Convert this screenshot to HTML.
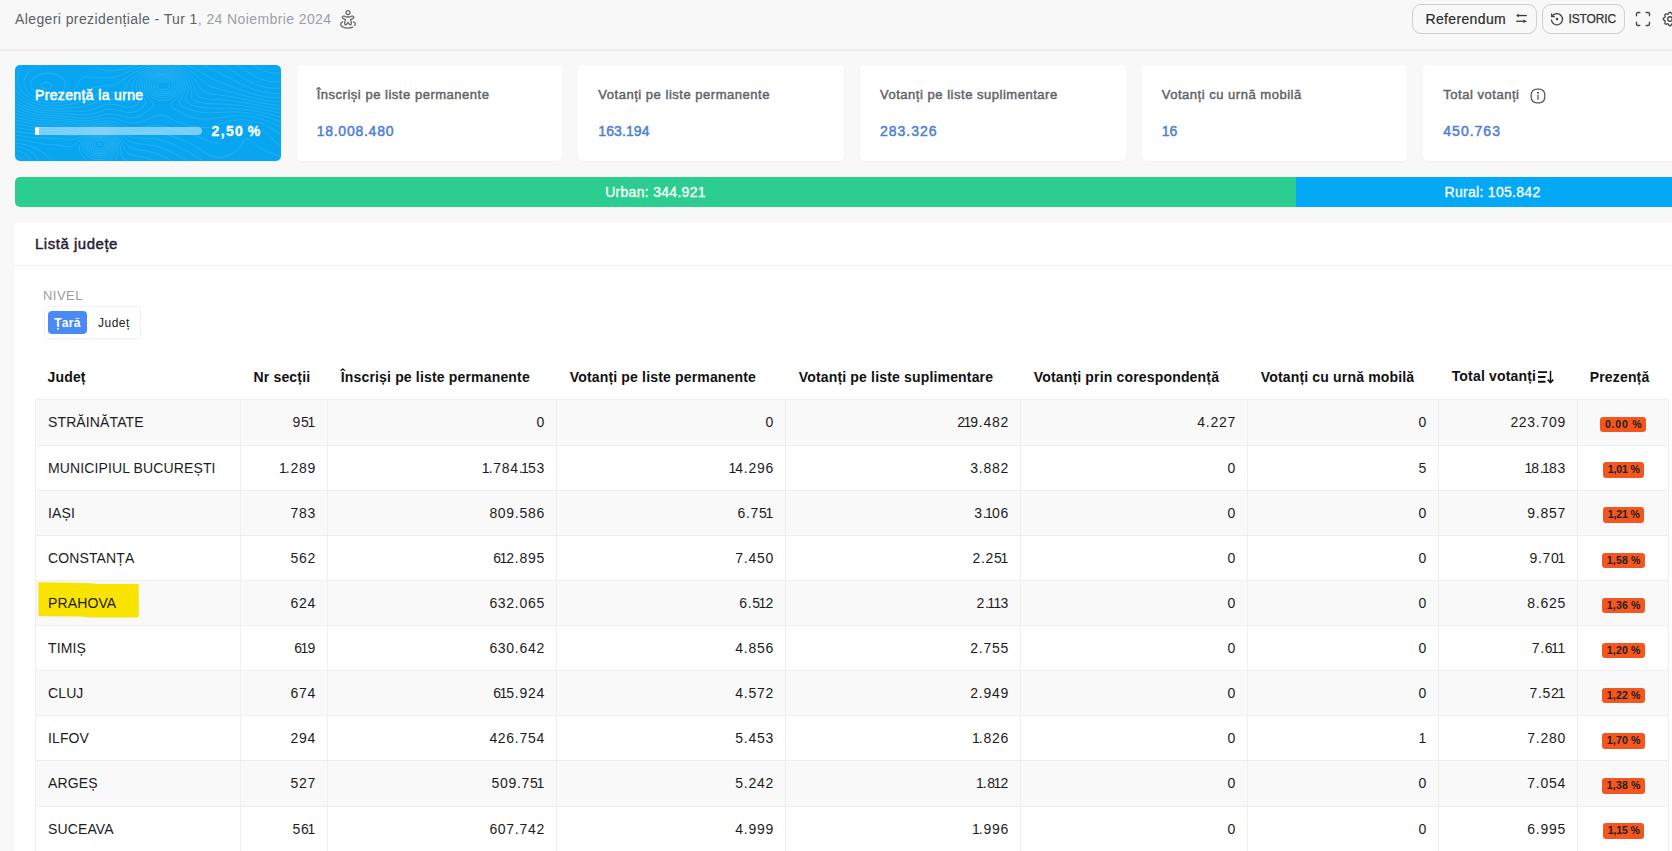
<!DOCTYPE html>
<html>
<head>
<meta charset="utf-8">
<style>
*{box-sizing:border-box;margin:0;padding:0}
html,body{width:1672px;height:851px;overflow:hidden;background:#f8f8f8;font-family:"Liberation Sans",sans-serif;color:#1a1a1a}
.abs{position:absolute}
#topbar{position:absolute;left:0;top:0;width:1672px;height:50px;background:#f8f8f8;border-bottom:1px solid #e9e9e9;box-shadow:0 1px 2px rgba(0,0,0,0.03)}
#title{position:absolute;left:15px;top:10px;font-size:14px;line-height:18px;color:#5b5e65;white-space:nowrap;letter-spacing:0.4px}
#title span{color:#9b9fa6}
.btn{position:absolute;top:4px;height:30px;border:1px solid #cfcfcf;border-radius:9px;background:#f8f8f8;white-space:nowrap}
.card{position:absolute;top:65px;height:96px;width:265.67px;background:#fff;border-radius:5px;box-shadow:0 1px 2px rgba(0,0,0,0.035)}
.card .t{position:absolute;left:20px;font-size:13px;font-weight:400;color:#5f6368;white-space:nowrap;letter-spacing:0.52px;-webkit-text-stroke:0.45px #5f6368}
.card .v{position:absolute;left:20px;font-size:14px;font-weight:400;-webkit-text-stroke:0.5px #4f80d4;color:#4f80d4;white-space:nowrap;letter-spacing:0.75px}
#panel{position:absolute;left:15px;top:223px;width:1674px;height:700px;background:#fff}
table{position:absolute;left:35px;top:355px;border-collapse:collapse;table-layout:fixed}
th{height:44px;text-align:left;font-size:14px;font-weight:700;padding:0 0 0 13px;white-space:nowrap;letter-spacing:0.17px;color:#111}
td{height:45.125px;font-size:14px;padding:0 11.3px 0 12px;text-align:right;border:1px solid #efefef;white-space:nowrap;color:#1c1c1c;letter-spacing:0.7px}
.o{font-weight:400;letter-spacing:-1px}
.p{font-weight:400;letter-spacing:-1.5px}
td:first-child{text-align:left;padding-left:12px;letter-spacing:0.12px}
th:first-child,th:last-child{padding-left:12px}
tbody tr:nth-child(odd) td{background:#f9f9f9}
tbody tr:first-child td{height:46px}
.badge{display:inline-block;background:#f4561f;color:#1e1e1e;font-size:10.5px;font-weight:700;border-radius:3px;padding:0 4px 0 5px;height:15.5px;line-height:15.5px;letter-spacing:0.2px;position:relative;top:1.5px}
td.pc{text-align:center;padding:0;letter-spacing:0}
</style>
</head>
<body>
<div id="topbar">
  <div id="title">Alegeri prezidențiale - Tur 1<span>, 24 Noiembrie 2024</span></div>
  <svg class="abs" style="left:338px;top:8px" width="20" height="22" viewBox="0 0 20 22" fill="none" stroke="#6a6a6a" stroke-width="1.3" stroke-linecap="round" stroke-linejoin="round">
    <circle cx="10" cy="4.6" r="2"/>
    <path d="M6.2 8.2 C4.3 7.6 3.6 9.4 5 10.4 L7.4 11.6 L6.6 15.2 C6.3 16.6 7.9 17.3 8.7 16.2 L10 14.4 L11.3 16.2 C12.1 17.3 13.7 16.6 13.4 15.2 L12.6 11.6 L15 10.4 C16.4 9.4 15.7 7.6 13.8 8.2 L11.4 9 L8.6 9 Z"/>
    <path d="M4.6 13.8 C2 15 2 17.6 4.5 18.8 C7.5 20.1 12 20.2 14.8 19.2"/>
    <path d="M15.6 13.8 C17.6 14.6 17.9 16.2 16.6 17.4"/>
  </svg>
  <div class="btn" style="left:1412px;width:124.5px"></div>
  <div class="abs" style="left:1425.5px;top:10px;font-size:14px;line-height:18px;color:#2b2b2b;white-space:nowrap;letter-spacing:0.35px;-webkit-text-stroke:0.2px #2b2b2b">Referendum</div>
  <svg class="abs" style="left:1514px;top:12px" width="14" height="13" viewBox="0 0 14 13" fill="#3a3a3a" stroke="none">
    <path d="M4.5 2.9 H12.8 V4.2 H4.5 Z"/><path d="M2.2 3.5 L4.8 1.6 L4.8 5.4 Z"/>
    <path d="M2.2 8.6 H9.5 V9.9 H2.2 Z"/><path d="M13 9.25 L9.3 7.4 L9.3 11.1 Z"/>
  </svg>
  <div class="btn" style="left:1541.5px;width:83px"></div>
  <svg class="abs" style="left:1549px;top:11px" width="16" height="16" viewBox="0 0 16 16" fill="none" stroke="#444" stroke-width="1.3" stroke-linecap="round" stroke-linejoin="round">
    <path d="M3.2 5.2 A5.6 5.6 0 1 1 2.4 9.2"/>
    <path d="M2.6 2.8 V5.6 H5.4"/>
    <circle cx="8" cy="8" r="0.6" fill="#444"/>
  </svg>
  <div class="abs" style="left:1568.5px;top:12px;font-size:12px;line-height:14px;color:#333;white-space:nowrap;letter-spacing:-0.15px;-webkit-text-stroke:0.25px #333">ISTORIC</div>
  <svg class="abs" style="left:1635px;top:11px" width="17" height="17" viewBox="0 0 17 17" fill="none" stroke="#4a4a4a" stroke-width="1.4" stroke-linecap="round" stroke-linejoin="round">
    <path d="M1.5 4.8 V3 Q1.5 1.5 3 1.5 H4.8 M11.2 1.5 H13 Q14.5 1.5 14.5 3 V4.8 M14.5 11.2 V13 Q14.5 14.5 13 14.5 H11.2 M4.8 14.5 H3 Q1.5 14.5 1.5 13 V11.2"/>
  </svg>
  <svg class="abs" style="left:1661px;top:10px" width="18" height="18" viewBox="0 0 24 24" fill="none" stroke="#4a4a4a" stroke-width="1.8" stroke-linecap="round" stroke-linejoin="round">
    <path d="M10.3 4.3c.4-1.8 3-1.8 3.4 0a1.7 1.7 0 0 0 2.6 1.1c1.5-.9 3.3.8 2.4 2.4a1.7 1.7 0 0 0 1 2.5c1.8.4 1.8 3 0 3.4a1.7 1.7 0 0 0-1 2.6c.9 1.5-.9 3.3-2.4 2.4a1.7 1.7 0 0 0-2.6 1c-.4 1.8-3 1.8-3.4 0a1.7 1.7 0 0 0-2.6-1c-1.5.9-3.3-.9-2.4-2.4a1.7 1.7 0 0 0-1-2.6c-1.8-.4-1.8-3 0-3.4a1.7 1.7 0 0 0 1-2.5c-.9-1.6.9-3.3 2.4-2.4 1 .6 2.3.1 2.6-1.1z"/>
    <circle cx="12" cy="12" r="3"/>
  </svg>
</div>
<div class="card" style="left:15px;background:#08a6f0;overflow:hidden">
<svg class="abs" style="left:0;top:0" width="266" height="96" viewBox="0 0 266 96" fill="none" stroke="rgba(255,255,255,0.13)" stroke-width="0.9"><path d="M237.2 0.0 L238.0 0.5 L239.0 1.0 L240.0 1.6 L241.0 2.1 L242.0 2.7 L243.0 3.2 L244.0 3.7 L245.0 4.2 L246.0 4.6 L247.0 5.1 L248.1 5.5 L249.4 6.0 L250.5 6.4 L251.5 6.7 L252.5 7.0 L254.0 7.4 L255.0 7.6 L256.5 7.9 L257.5 8.0 L259.0 8.2 L260.5 8.3 L262.0 8.4 L263.5 8.4 L265.0 8.4"/><path d="M222.3 0.0 L223.0 0.5 L224.0 1.1 L225.0 1.8 L226.0 2.4 L226.9 3.0 L227.7 3.5 L228.5 4.0 L229.5 4.7 L230.5 5.3 L231.5 6.0 L232.3 6.5 L233.1 7.0 L234.0 7.6 L235.0 8.2 L236.0 8.8 L237.0 9.4 L238.0 10.0 L238.9 10.5 L239.8 11.0 L240.7 11.5 L241.7 12.0 L242.7 12.5 L243.8 13.0 L244.9 13.5 L246.0 13.9 L247.0 14.3 L248.0 14.6 L249.1 15.0 L250.5 15.4 L251.5 15.6 L253.0 16.0 L254.0 16.1 L255.5 16.4 L256.9 16.5 L258.0 16.6 L259.5 16.6 L261.0 16.6 L262.5 16.6 L264.0 16.5 L265.0 16.4"/><path d="M206.8 0.0 L207.8 0.5 L208.7 1.0 L209.6 1.5 L210.5 2.0 L211.5 2.6 L212.5 3.1 L213.5 3.7 L214.5 4.3 L215.5 4.9 L216.5 5.5 L217.3 6.0 L218.1 6.5 L219.0 7.0 L220.0 7.7 L221.0 8.3 L222.0 8.9 L222.9 9.5 L223.7 10.0 L224.5 10.5 L225.5 11.1 L226.5 11.7 L227.5 12.3 L228.5 13.0 L229.4 13.5 L230.3 14.0 L231.1 14.5 L232.0 15.0 L233.0 15.6 L234.0 16.1 L235.0 16.6 L236.0 17.1 L237.0 17.6 L238.0 18.1 L239.0 18.6 L240.0 19.0 L241.2 19.5 L242.5 20.0 L243.5 20.3 L244.5 20.7 L245.5 21.0 L247.0 21.4 L248.0 21.7 L249.2 22.0 L250.5 22.3 L251.7 22.5 L253.0 22.7 L254.5 22.9 L255.5 23.0 L257.0 23.1 L258.5 23.2 L260.0 23.2 L261.5 23.2 L263.0 23.2 L264.5 23.1 L265.7 23.0"/><path d="M186.6 0.0 L187.9 0.5 L189.0 0.9 L190.0 1.3 L191.0 1.7 L192.0 2.1 L193.0 2.6 L194.0 3.0 L195.2 3.5 L196.3 4.0 L197.4 4.5 L198.4 5.0 L199.5 5.5 L200.5 6.0 L201.5 6.5 L202.5 6.9 L203.5 7.4 L204.5 7.9 L205.5 8.4 L206.5 8.9 L207.5 9.5 L208.5 10.0 L209.5 10.5 L210.5 11.0 L211.4 11.5 L212.4 12.0 L213.3 12.5 L214.3 13.0 L215.2 13.5 L216.2 14.0 L217.1 14.5 L218.1 15.0 L219.0 15.5 L220.0 16.0 L221.0 16.5 L222.0 17.0 L223.0 17.5 L224.0 18.1 L225.0 18.6 L226.0 19.0 L227.0 19.5 L228.0 20.0 L229.1 20.5 L230.2 21.0 L231.3 21.5 L232.5 22.0 L233.5 22.4 L234.5 22.8 L235.5 23.2 L236.5 23.6 L237.6 24.0 L239.0 24.5 L240.0 24.8 L241.0 25.1 L242.2 25.5 L243.5 25.9 L244.5 26.1 L245.9 26.5 L247.0 26.7 L248.2 27.0 L249.5 27.3 L250.9 27.5 L252.0 27.7 L253.5 27.9 L254.5 28.0 L256.0 28.2 L257.5 28.3 L259.0 28.4 L260.5 28.4 L262.0 28.4 L263.5 28.4 L265.0 28.4"/><path d="M32.9 24.0 L34.0 23.7 L35.0 23.3 L36.0 22.6 L36.5 21.9 L36.7 20.5 L36.4 19.5 L35.5 18.6 L34.5 18.0 L33.5 17.7 L32.5 17.5 L31.0 17.4 L30.0 17.6 L28.6 18.0 L27.8 18.5 L27.0 19.4 L26.6 20.5 L27.0 21.9 L27.5 22.5 L28.5 23.3 L29.5 23.7 L30.8 24.0 L32.0 24.1"/><path d="M79.3 0.0 L80.0 0.6 L81.0 1.4 L81.9 2.0 L82.7 2.5 L83.6 3.0 L84.6 3.5 L85.8 4.0 L87.0 4.5 L88.0 4.8 L89.0 5.1 L90.5 5.4 L91.5 5.6 L93.0 5.7 L94.5 5.9 L96.0 5.9 L97.5 5.9 L99.0 5.8 L100.5 5.6 L101.5 5.5 L103.0 5.2 L104.1 5.0 L105.5 4.7 L106.5 4.5 L108.0 4.1 L109.0 3.8 L110.2 3.5 L111.5 3.1 L112.5 2.8 L113.6 2.5 L115.0 2.1 L116.0 1.8 L117.0 1.5 L118.5 1.1 L119.5 0.8 L120.5 0.5 L122.0 0.1"/><path d="M170.2 0.0 L171.5 0.4 L172.5 0.8 L173.5 1.1 L174.5 1.5 L175.7 2.0 L176.9 2.5 L178.0 3.0 L179.0 3.5 L180.0 3.9 L181.0 4.5 L182.0 5.0 L183.0 5.5 L183.8 6.0 L184.7 6.5 L185.6 7.0 L186.5 7.6 L187.5 8.2 L188.5 8.8 L189.5 9.4 L190.5 10.0 L191.4 10.5 L192.3 11.0 L193.1 11.5 L194.0 12.0 L195.0 12.5 L196.0 13.0 L197.0 13.5 L198.0 14.0 L199.1 14.5 L200.2 15.0 L201.4 15.5 L202.5 16.0 L203.5 16.4 L204.5 16.8 L205.5 17.2 L206.5 17.5 L207.7 18.0 L209.0 18.5 L210.0 18.9 L211.0 19.3 L212.0 19.7 L213.0 20.0 L214.2 20.5 L215.5 21.0 L216.5 21.4 L217.5 21.8 L218.5 22.1 L219.5 22.5 L220.7 23.0 L222.0 23.5 L223.0 23.8 L224.0 24.2 L225.0 24.6 L226.2 25.0 L227.5 25.5 L228.5 25.8 L229.5 26.2 L230.5 26.5 L232.0 27.0 L233.0 27.3 L234.0 27.7 L235.1 28.0 L236.5 28.4 L237.5 28.7 L238.6 29.0 L240.0 29.4 L241.0 29.6 L242.4 30.0 L243.5 30.3 L244.6 30.5 L246.0 30.8 L247.0 31.0 L248.5 31.3 L249.7 31.5 L251.0 31.7 L252.5 31.9 L253.5 32.1 L255.0 32.3 L256.5 32.4 L257.5 32.5 L259.0 32.6 L260.5 32.7 L262.0 32.8 L263.5 32.8 L265.0 32.9"/><path d="M37.7 30.5 L39.0 30.2 L40.0 30.0 L41.4 29.5 L42.5 29.1 L43.5 28.6 L44.5 28.1 L45.4 27.5 L46.1 27.0 L47.0 26.2 L47.8 25.5 L48.5 24.6 L49.0 23.9 L49.5 23.0 L50.0 21.8 L50.3 20.5 L50.4 19.0 L50.1 17.5 L49.8 16.5 L49.3 15.5 L48.6 14.5 L48.0 13.7 L47.2 13.0 L46.5 12.4 L45.5 11.7 L44.5 11.1 L43.5 10.5 L42.5 10.1 L41.5 9.7 L40.5 9.4 L39.2 9.0 L38.0 8.7 L36.6 8.5 L35.5 8.4 L34.0 8.2 L32.5 8.2 L31.0 8.3 L29.5 8.4 L28.5 8.5 L27.0 8.8 L26.0 9.1 L24.6 9.5 L23.5 9.9 L22.5 10.3 L21.5 10.9 L20.5 11.5 L19.8 12.0 L19.0 12.6 L18.1 13.5 L17.5 14.2 L17.0 15.0 L16.4 16.0 L16.0 17.1 L15.7 18.5 L15.7 20.0 L16.0 21.5 L16.3 22.5 L16.8 23.5 L17.5 24.5 L18.0 25.1 L18.8 26.0 L19.5 26.6 L20.5 27.4 L21.5 28.0 L22.3 28.5 L23.4 29.0 L24.5 29.5 L25.5 29.8 L26.5 30.1 L28.0 30.5 L29.0 30.6 L30.5 30.8 L32.0 30.9 L33.5 30.9 L35.0 30.9 L36.5 30.7 L37.7 30.5"/><path d="M28.2 0.0 L27.0 0.3 L26.0 0.5 L24.5 1.0 L23.5 1.4 L22.5 1.7 L21.5 2.2 L20.5 2.6 L19.5 3.1 L18.5 3.7 L17.5 4.3 L16.5 5.0 L15.8 5.5 L15.0 6.2 L14.1 7.0 L13.5 7.6 L12.6 8.5 L12.0 9.3 L11.5 10.0 L10.8 11.0 L10.3 12.0 L9.9 13.0 L9.5 14.0 L9.1 15.5 L9.0 16.5 L8.9 18.0 L9.0 19.0 L9.3 20.5 L9.6 21.5 L10.0 22.6 L10.5 23.7 L11.0 24.5 L11.7 25.5 L12.5 26.5 L13.0 27.1 L13.9 28.0 L14.5 28.5 L15.5 29.3 L16.5 30.0 L17.3 30.5 L18.1 31.0 L19.1 31.5 L20.1 32.0 L21.3 32.5 L22.5 33.0 L23.5 33.3 L24.5 33.6 L26.0 34.0 L27.0 34.2 L28.5 34.4 L29.5 34.6 L31.0 34.7 L32.5 34.8 L34.0 34.8 L35.5 34.8 L37.0 34.7 L38.5 34.6 L39.5 34.5 L41.0 34.2 L42.2 34.0 L43.5 33.7 L44.5 33.5 L46.0 33.0 L47.0 32.7 L48.0 32.3 L49.0 31.9 L50.0 31.5 L51.0 31.0 L52.0 30.5 L53.0 29.9 L54.0 29.3 L55.0 28.5 L55.7 28.0 L56.5 27.3 L57.4 26.5 L58.0 25.9 L58.8 25.0 L59.5 24.2 L60.0 23.5 L60.8 22.5 L61.4 21.5 L62.0 20.6 L62.5 19.7 L63.0 18.9 L63.5 18.0 L64.1 17.0 L64.7 16.0 L65.4 15.0 L66.0 14.2 L66.8 13.5 L67.5 13.0 L68.5 12.5 L70.0 12.1 L71.0 12.0 L72.5 11.9 L74.0 12.0 L75.0 12.1 L76.5 12.2 L78.0 12.4 L79.4 12.5 L80.5 12.6 L82.0 12.8 L83.5 12.9 L85.0 13.0 L86.0 13.0 L87.5 13.1 L89.0 13.1 L90.5 13.1 L92.0 13.0 L93.0 13.0 L94.5 12.8 L96.0 12.6 L97.0 12.5 L98.5 12.2 L99.5 12.0 L101.0 11.6 L102.0 11.3 L103.0 10.9 L104.3 10.5 L105.5 10.0 L106.5 9.7 L107.5 9.2 L108.5 8.8 L109.5 8.4 L110.5 8.0 L111.6 7.5 L112.7 7.0 L113.9 6.5 L115.0 6.0 L116.0 5.6 L117.0 5.2 L118.0 4.8 L119.0 4.4 L120.1 4.0 L121.5 3.5 L122.5 3.2 L123.5 2.8 L124.6 2.5 L126.0 2.1 L127.0 1.8 L128.2 1.5 L129.5 1.2 L130.5 0.9 L132.0 0.6 L133.0 0.4 L134.5 0.2 L135.5 0.0"/><path d="M157.8 0.0 L159.0 0.2 L160.5 0.5 L161.5 0.7 L162.6 1.0 L164.0 1.4 L165.0 1.6 L166.1 2.0 L167.5 2.5 L168.5 2.8 L169.5 3.2 L170.5 3.6 L171.5 4.1 L172.5 4.6 L173.5 5.1 L174.5 5.6 L175.5 6.2 L176.5 6.8 L177.5 7.4 L178.3 8.0 L179.0 8.5 L180.0 9.2 L181.0 10.0 L181.6 10.5 L182.5 11.3 L183.3 12.0 L184.0 12.7 L184.9 13.5 L185.5 14.1 L186.4 15.0 L187.0 15.6 L188.0 16.5 L188.5 17.0 L189.5 17.9 L190.3 18.5 L191.0 19.0 L192.0 19.7 L193.0 20.3 L194.0 20.8 L195.0 21.3 L196.0 21.7 L197.0 22.1 L198.3 22.5 L199.5 22.9 L200.5 23.1 L201.9 23.5 L203.0 23.8 L204.0 24.0 L205.5 24.4 L206.5 24.6 L208.0 25.0 L209.0 25.2 L210.2 25.5 L211.5 25.8 L212.5 26.1 L214.0 26.4 L215.0 26.7 L216.1 27.0 L217.5 27.4 L218.5 27.6 L219.9 28.0 L221.0 28.3 L222.0 28.6 L223.5 29.0 L224.5 29.3 L225.5 29.5 L227.0 29.9 L228.0 30.2 L229.1 30.5 L230.5 30.9 L231.5 31.1 L232.9 31.5 L234.0 31.8 L235.0 32.0 L236.5 32.4 L237.5 32.6 L239.0 33.0 L240.0 33.2 L241.3 33.5 L242.5 33.8 L243.6 34.0 L245.0 34.3 L246.1 34.5 L247.5 34.8 L248.8 35.0 L250.0 35.2 L251.5 35.4 L252.5 35.6 L254.0 35.8 L255.4 36.0 L256.5 36.1 L258.0 36.3 L259.5 36.5 L260.5 36.6 L262.0 36.7 L263.5 36.8 L265.0 36.9"/><path d="M6.2 0.0 L5.9 1.0 L5.5 2.5 L5.2 3.5 L4.8 4.5 L4.5 5.5 L4.0 7.0 L3.7 8.0 L3.4 9.0 L3.1 10.5 L3.0 11.5 L2.8 13.0 L2.7 14.5 L2.8 16.0 L2.9 17.5 L3.1 18.5 L3.5 20.0 L3.8 21.0 L4.2 22.0 L4.7 23.0 L5.2 24.0 L5.9 25.0 L6.5 25.9 L7.0 26.6 L7.8 27.5 L8.5 28.3 L9.2 29.0 L10.0 29.7 L11.0 30.5 L11.6 31.0 L12.5 31.6 L13.5 32.3 L14.5 32.9 L15.5 33.5 L16.5 34.0 L17.5 34.4 L18.5 34.9 L19.5 35.3 L20.5 35.6 L21.6 36.0 L23.0 36.4 L24.0 36.7 L25.5 37.0 L26.5 37.2 L28.0 37.5 L29.0 37.6 L30.5 37.8 L32.0 37.9 L33.5 37.9 L35.0 38.0 L36.5 38.0 L38.0 37.9 L39.5 37.8 L41.0 37.7 L42.5 37.5 L43.5 37.4 L45.0 37.2 L46.1 37.0 L47.5 36.7 L48.7 36.5 L50.0 36.2 L51.0 35.9 L52.5 35.5 L53.5 35.2 L54.5 34.9 L55.8 34.5 L57.0 34.0 L58.0 33.6 L59.0 33.2 L60.0 32.8 L61.0 32.3 L62.0 31.7 L63.0 31.2 L64.0 30.6 L65.0 30.0 L65.8 29.5 L66.6 29.0 L67.5 28.5 L68.5 27.8 L69.5 27.2 L70.5 26.6 L71.5 26.0 L72.4 25.5 L73.3 25.0 L74.4 24.5 L75.5 24.0 L76.5 23.6 L77.5 23.2 L78.5 22.9 L80.0 22.5 L81.0 22.3 L82.3 22.0 L83.5 21.8 L85.0 21.5 L86.0 21.4 L87.5 21.2 L88.9 21.0 L90.0 20.9 L91.5 20.7 L93.0 20.5 L94.0 20.4 L95.5 20.1 L96.5 20.0 L98.0 19.7 L99.0 19.4 L100.5 19.0 L101.5 18.7 L102.5 18.3 L103.5 17.8 L104.5 17.3 L105.5 16.7 L106.5 16.0 L107.2 15.5 L108.0 14.9 L109.0 14.2 L110.0 13.5 L110.6 13.0 L111.5 12.4 L112.5 11.7 L113.5 11.0 L114.3 10.5 L115.0 10.0 L116.0 9.4 L117.0 8.8 L118.0 8.3 L119.0 7.7 L120.0 7.2 L121.0 6.8 L122.0 6.3 L123.0 5.9 L124.0 5.5 L125.2 5.0 L126.5 4.5 L127.5 4.2 L128.5 3.9 L129.7 3.5 L131.0 3.2 L132.0 2.9 L133.5 2.6 L134.5 2.3 L136.0 2.1 L137.0 1.9 L138.5 1.7 L140.0 1.5 L141.0 1.4 L142.5 1.3 L144.0 1.2 L145.5 1.1 L147.0 1.1 L148.5 1.1 L150.0 1.2 L151.5 1.3 L153.0 1.4 L154.0 1.6 L155.5 1.8 L157.0 2.0 L158.0 2.2 L159.5 2.5 L160.5 2.7 L161.5 3.0 L163.0 3.4 L164.0 3.8 L165.0 4.1 L166.0 4.5 L167.2 5.0 L168.3 5.5 L169.4 6.0 L170.3 6.5 L171.2 7.0 L172.0 7.5 L173.0 8.1 L174.0 8.8 L174.9 9.5 L175.5 10.0 L176.5 10.8 L177.2 11.5 L178.0 12.3 L178.7 13.0 L179.5 14.0 L180.0 14.6 L180.7 15.5 L181.4 16.5 L182.0 17.5 L182.5 18.3 L183.0 19.1 L183.5 20.0 L184.1 21.0 L184.7 22.0 L185.4 23.0 L186.0 23.8 L186.6 24.5 L187.5 25.4 L188.2 26.0 L189.0 26.5 L190.0 27.0 L191.1 27.5 L192.5 28.0 L193.5 28.3 L194.5 28.5 L196.0 28.8 L197.2 29.0 L198.5 29.2 L200.0 29.4 L201.0 29.5 L202.5 29.7 L204.0 29.9 L205.0 30.0 L206.5 30.2 L208.0 30.4 L209.0 30.6 L210.5 30.8 L211.8 31.0 L213.0 31.2 L214.5 31.4 L215.5 31.6 L217.0 31.9 L218.0 32.1 L219.5 32.3 L220.5 32.5 L222.0 32.8 L223.0 33.0 L224.5 33.3 L225.5 33.6 L227.0 33.9 L228.0 34.1 L229.5 34.4 L230.5 34.6 L232.0 34.9 L233.0 35.2 L234.5 35.5 L235.5 35.7 L237.0 36.0 L238.0 36.2 L239.4 36.5 L240.5 36.7 L241.8 37.0 L243.0 37.2 L244.4 37.5 L245.5 37.7 L247.0 38.0 L248.0 38.2 L249.5 38.5 L250.5 38.6 L252.0 38.9 L253.0 39.0 L254.5 39.3 L256.0 39.5 L257.0 39.6 L258.5 39.9 L259.6 40.0 L261.0 40.2 L262.5 40.4 L263.8 40.5 L265.0 40.6"/><path d="M0.0 23.9 L0.5 24.7 L1.1 25.5 L1.8 26.5 L2.5 27.3 L3.1 28.0 L4.0 29.0 L4.5 29.5 L5.5 30.4 L6.2 31.0 L7.0 31.7 L8.0 32.5 L8.8 33.0 L9.5 33.5 L10.5 34.1 L11.5 34.7 L12.5 35.3 L13.5 35.8 L14.5 36.3 L15.5 36.8 L16.5 37.2 L17.5 37.6 L18.7 38.0 L20.0 38.4 L21.0 38.7 L22.0 39.0 L23.5 39.4 L24.5 39.6 L26.0 39.9 L27.0 40.1 L28.5 40.3 L30.0 40.5 L31.0 40.5 L32.5 40.7 L34.0 40.7 L35.5 40.8 L37.0 40.8 L38.5 40.8 L40.0 40.7 L41.5 40.7 L43.0 40.6 L44.0 40.5 L45.5 40.4 L47.0 40.2 L48.5 40.1 L49.5 39.9 L51.0 39.8 L52.5 39.6 L53.5 39.4 L55.0 39.2 L56.1 39.0 L57.5 38.7 L58.8 38.5 L60.0 38.2 L61.1 38.0 L62.5 37.6 L63.5 37.4 L64.8 37.0 L66.0 36.6 L67.0 36.3 L68.0 35.9 L69.0 35.5 L70.2 35.0 L71.3 34.5 L72.4 34.0 L73.5 33.5 L74.5 33.0 L75.5 32.6 L76.5 32.1 L77.5 31.7 L78.5 31.3 L79.5 30.9 L80.5 30.5 L81.8 30.0 L83.0 29.6 L84.0 29.3 L85.3 29.0 L86.5 28.7 L87.6 28.5 L89.0 28.2 L90.5 28.0 L91.5 27.9 L93.0 27.8 L94.5 27.7 L96.0 27.6 L97.5 27.6 L99.0 27.6 L100.5 27.6 L102.0 27.6 L103.3 27.5 L104.5 27.4 L106.0 27.1 L107.0 26.8 L108.0 26.2 L108.9 25.5 L109.5 24.7 L110.0 24.0 L110.5 23.0 L111.0 22.0 L111.5 20.9 L112.0 19.8 L112.5 18.9 L113.0 18.0 L113.6 17.0 L114.3 16.0 L115.0 15.1 L115.5 14.5 L116.5 13.5 L117.0 13.0 L118.0 12.1 L118.7 11.5 L119.5 10.9 L120.5 10.2 L121.5 9.5 L122.4 9.0 L123.2 8.5 L124.2 8.0 L125.2 7.5 L126.3 7.0 L127.5 6.5 L128.5 6.1 L129.5 5.7 L130.5 5.4 L131.8 5.0 L133.0 4.6 L134.0 4.4 L135.5 4.0 L136.5 3.8 L138.0 3.6 L139.0 3.4 L140.5 3.2 L142.0 3.1 L143.0 3.0 L144.5 2.9 L146.0 2.8 L147.5 2.8 L149.0 2.9 L150.5 2.9 L151.5 3.0 L153.0 3.2 L154.5 3.4 L155.5 3.5 L157.0 3.8 L158.0 4.0 L159.5 4.4 L160.5 4.7 L161.6 5.0 L163.0 5.5 L164.0 5.8 L165.0 6.3 L166.0 6.7 L167.0 7.2 L168.0 7.7 L169.0 8.3 L170.0 8.9 L170.8 9.5 L171.5 10.0 L172.5 10.8 L173.3 11.5 L174.0 12.2 L174.7 13.0 L175.5 13.9 L176.0 14.6 L176.7 15.5 L177.3 16.5 L177.8 17.5 L178.3 18.5 L178.7 19.5 L179.1 20.5 L179.5 22.0 L179.8 23.0 L180.0 24.0 L180.4 25.5 L180.7 26.5 L181.0 27.5 L181.5 28.6 L182.0 29.5 L182.9 30.5 L183.5 31.0 L184.5 31.7 L185.5 32.2 L186.5 32.6 L187.9 33.0 L189.0 33.3 L190.1 33.5 L191.5 33.7 L193.0 33.9 L194.0 34.0 L195.5 34.2 L197.0 34.3 L198.5 34.4 L200.0 34.5 L201.0 34.6 L202.5 34.6 L204.0 34.7 L205.5 34.8 L207.0 34.9 L208.0 35.0 L209.5 35.1 L211.0 35.3 L212.5 35.4 L213.5 35.5 L215.0 35.7 L216.5 35.9 L217.6 36.0 L219.0 36.2 L220.5 36.4 L221.5 36.5 L223.0 36.8 L224.5 37.0 L225.5 37.2 L227.0 37.4 L228.0 37.6 L229.5 37.8 L230.5 38.0 L232.0 38.3 L233.2 38.5 L234.5 38.7 L235.8 39.0 L237.0 39.2 L238.4 39.5 L239.5 39.7 L241.0 40.0 L242.0 40.2 L243.5 40.5 L244.5 40.7 L246.0 41.0 L247.0 41.1 L248.5 41.4 L249.5 41.6 L251.0 41.9 L252.0 42.1 L253.5 42.4 L254.5 42.5 L256.0 42.8 L257.2 43.0 L258.5 43.2 L260.0 43.5 L261.0 43.6 L262.5 43.9 L263.5 44.1 L265.0 44.3"/><path d="M0.0 30.1 L1.0 31.0 L1.6 31.5 L2.5 32.3 L3.4 33.0 L4.1 33.5 L5.0 34.2 L6.0 34.9 L7.0 35.5 L7.8 36.0 L8.7 36.5 L9.6 37.0 L10.5 37.5 L11.5 38.0 L12.6 38.5 L13.8 39.0 L15.0 39.5 L16.0 39.9 L17.0 40.2 L18.0 40.6 L19.4 41.0 L20.5 41.3 L21.5 41.5 L23.0 41.9 L24.0 42.1 L25.5 42.4 L26.5 42.5 L28.0 42.8 L29.5 42.9 L30.5 43.0 L32.0 43.2 L33.5 43.3 L35.0 43.3 L36.5 43.4 L38.0 43.4 L39.5 43.4 L41.0 43.4 L42.5 43.4 L44.0 43.3 L45.5 43.3 L47.0 43.2 L48.5 43.2 L50.0 43.1 L51.5 43.0 L52.5 43.0 L54.0 42.9 L55.5 42.8 L57.0 42.7 L58.5 42.7 L60.0 42.6 L61.0 42.5 L62.5 42.4 L64.0 42.2 L65.5 42.0 L66.5 41.9 L68.0 41.6 L69.0 41.4 L70.5 41.0 L71.5 40.7 L72.5 40.4 L73.8 40.0 L75.0 39.6 L76.0 39.2 L77.0 38.8 L78.0 38.3 L79.0 37.9 L80.0 37.5 L81.2 37.0 L82.4 36.5 L83.5 36.1 L84.5 35.7 L85.5 35.4 L86.9 35.0 L88.0 34.7 L89.1 34.5 L90.5 34.2 L92.0 34.1 L93.0 34.0 L94.5 33.9 L96.0 33.9 L97.4 34.0 L98.5 34.1 L100.0 34.3 L101.4 34.5 L102.5 34.7 L104.0 35.0 L105.0 35.2 L106.5 35.5 L107.5 35.7 L109.0 35.9 L110.5 36.0 L111.5 36.0 L112.5 36.0 L114.0 35.7 L115.0 35.3 L116.0 34.8 L116.8 34.0 L117.4 33.0 L117.7 32.0 L117.8 30.5 L117.7 29.0 L117.5 27.5 L117.4 26.5 L117.2 25.0 L117.1 23.5 L117.1 22.0 L117.3 20.5 L117.5 19.5 L118.0 18.0 L118.5 17.0 L119.0 16.0 L119.5 15.3 L120.1 14.5 L120.9 13.5 L121.5 12.9 L122.5 12.0 L123.1 11.5 L124.0 10.8 L125.0 10.2 L126.0 9.5 L127.0 9.0 L127.9 8.5 L129.0 8.0 L130.0 7.6 L131.0 7.2 L132.0 6.8 L133.0 6.5 L134.5 6.0 L135.5 5.8 L136.6 5.5 L138.0 5.2 L139.1 5.0 L140.5 4.8 L142.0 4.6 L143.2 4.5 L144.5 4.4 L146.0 4.4 L147.5 4.3 L149.0 4.4 L150.5 4.5 L151.5 4.5 L153.0 4.7 L154.5 4.9 L155.5 5.1 L157.0 5.4 L158.0 5.6 L159.3 6.0 L160.5 6.4 L161.5 6.7 L162.5 7.1 L163.5 7.5 L164.5 8.0 L165.5 8.5 L166.5 9.0 L167.5 9.7 L168.5 10.3 L169.4 11.0 L170.0 11.5 L171.0 12.4 L171.6 13.0 L172.4 14.0 L173.0 14.7 L173.5 15.5 L174.1 16.5 L174.6 17.5 L175.1 18.5 L175.5 19.9 L175.8 21.0 L176.0 22.5 L176.1 23.5 L176.1 25.0 L176.1 26.5 L176.0 28.0 L176.0 29.0 L176.0 30.0 L176.2 31.5 L176.5 32.6 L177.0 33.5 L177.9 34.5 L178.5 35.0 L179.5 35.7 L180.5 36.2 L181.5 36.5 L182.9 37.0 L184.0 37.3 L185.0 37.5 L186.5 37.8 L187.8 38.0 L189.0 38.2 L190.5 38.3 L192.0 38.5 L193.0 38.5 L194.5 38.6 L196.0 38.7 L197.5 38.8 L199.0 38.9 L200.5 38.9 L202.0 39.0 L203.4 39.0 L204.5 39.0 L206.0 39.1 L207.5 39.1 L209.0 39.2 L210.5 39.2 L212.0 39.3 L213.5 39.4 L215.0 39.5 L216.0 39.6 L217.5 39.7 L219.0 39.8 L220.5 40.0 L221.5 40.1 L223.0 40.2 L224.5 40.4 L225.5 40.5 L227.0 40.7 L228.5 40.9 L229.5 41.1 L231.0 41.3 L232.2 41.5 L233.5 41.7 L235.0 42.0 L236.0 42.1 L237.5 42.4 L238.5 42.6 L240.0 42.9 L241.0 43.0 L242.5 43.3 L243.5 43.5 L245.0 43.8 L246.0 44.0 L247.5 44.3 L248.5 44.5 L250.0 44.8 L251.0 45.0 L252.5 45.3 L253.5 45.6 L255.0 45.9 L256.0 46.1 L257.5 46.4 L258.5 46.6 L260.0 46.9 L261.0 47.1 L262.5 47.5 L263.5 47.7 L265.0 48.0 L266.0 48.2"/><path d="M0.0 34.4 L0.8 35.0 L1.5 35.5 L2.5 36.2 L3.5 36.8 L4.5 37.4 L5.5 38.0 L6.4 38.5 L7.4 39.0 L8.4 39.5 L9.4 40.0 L10.5 40.5 L11.5 40.9 L12.5 41.3 L13.5 41.7 L14.5 42.1 L15.7 42.5 L17.0 42.9 L18.0 43.2 L19.1 43.5 L20.5 43.9 L21.5 44.1 L23.0 44.4 L24.0 44.6 L25.5 44.8 L26.5 45.0 L28.0 45.2 L29.5 45.4 L30.8 45.5 L32.0 45.6 L33.5 45.7 L35.0 45.8 L36.5 45.8 L38.0 45.9 L39.5 45.9 L41.0 45.9 L42.5 46.0 L44.0 46.0 L45.5 46.0 L47.0 46.0 L48.5 46.0 L50.0 46.0 L51.0 46.0 L52.5 46.0 L54.0 46.1 L55.5 46.1 L57.0 46.1 L58.5 46.2 L60.0 46.2 L61.5 46.3 L63.0 46.3 L64.5 46.3 L66.0 46.3 L67.5 46.2 L69.0 46.1 L70.0 46.0 L71.5 45.8 L73.0 45.5 L74.0 45.3 L75.1 45.0 L76.5 44.6 L77.5 44.3 L78.5 43.9 L79.6 43.5 L80.9 43.0 L82.0 42.6 L83.0 42.2 L84.0 41.8 L85.0 41.4 L86.1 41.0 L87.5 40.5 L88.5 40.3 L89.5 40.0 L91.0 39.7 L92.2 39.5 L93.5 39.4 L95.0 39.3 L96.5 39.3 L98.0 39.4 L99.0 39.5 L100.5 39.7 L101.9 40.0 L103.0 40.2 L104.1 40.5 L105.5 40.8 L106.5 41.1 L108.0 41.4 L109.0 41.6 L110.5 41.9 L111.5 42.0 L113.0 42.1 L114.5 42.1 L116.0 42.0 L117.0 41.8 L118.2 41.5 L119.5 41.0 L120.5 40.5 L121.3 40.0 L122.0 39.5 L123.0 38.6 L123.5 37.9 L124.0 37.0 L124.4 35.5 L124.4 34.0 L124.1 32.5 L123.8 31.5 L123.4 30.5 L123.0 29.4 L122.5 28.1 L122.1 27.0 L121.8 26.0 L121.5 24.9 L121.2 23.5 L121.1 22.0 L121.1 20.5 L121.4 19.0 L121.7 18.0 L122.1 17.0 L122.6 16.0 L123.3 15.0 L124.0 14.1 L124.5 13.5 L125.5 12.6 L126.2 12.0 L127.0 11.4 L128.0 10.7 L129.0 10.1 L130.0 9.6 L131.0 9.1 L132.0 8.6 L133.0 8.2 L134.0 7.9 L135.1 7.5 L136.5 7.1 L137.5 6.8 L139.0 6.5 L140.0 6.3 L141.5 6.1 L142.5 6.0 L144.0 5.8 L145.5 5.8 L147.0 5.7 L148.5 5.7 L150.0 5.8 L151.5 5.9 L152.5 6.0 L154.0 6.3 L155.3 6.5 L156.5 6.8 L157.5 7.0 L159.0 7.5 L160.0 7.8 L161.0 8.2 L162.0 8.6 L163.0 9.0 L164.0 9.6 L165.0 10.1 L166.0 10.8 L167.0 11.5 L167.7 12.0 L168.5 12.7 L169.3 13.5 L170.0 14.3 L170.5 15.0 L171.2 16.0 L171.7 17.0 L172.2 18.0 L172.5 19.0 L172.9 20.5 L173.1 21.5 L173.1 23.0 L173.0 24.5 L172.9 25.5 L172.6 27.0 L172.3 28.0 L172.0 29.0 L171.5 30.5 L171.2 31.5 L171.0 32.5 L170.8 34.0 L171.0 35.5 L171.5 36.5 L172.0 37.2 L172.9 38.0 L173.6 38.5 L174.5 39.0 L175.5 39.5 L176.7 40.0 L178.0 40.4 L179.0 40.7 L180.0 41.0 L181.5 41.4 L182.5 41.6 L184.0 41.9 L185.0 42.0 L186.5 42.3 L188.0 42.5 L189.0 42.6 L190.5 42.7 L192.0 42.8 L193.5 42.9 L194.5 43.0 L196.0 43.1 L197.5 43.1 L199.0 43.1 L200.5 43.2 L202.0 43.2 L203.5 43.2 L205.0 43.1 L206.5 43.1 L208.0 43.1 L209.5 43.1 L211.0 43.1 L212.5 43.1 L214.0 43.2 L215.5 43.2 L217.0 43.2 L218.5 43.3 L220.0 43.4 L221.5 43.5 L222.5 43.5 L224.0 43.7 L225.5 43.8 L227.0 44.0 L228.0 44.1 L229.5 44.3 L231.0 44.4 L232.0 44.6 L233.5 44.8 L234.7 45.0 L236.0 45.2 L237.5 45.5 L238.5 45.6 L240.0 45.9 L241.0 46.1 L242.5 46.4 L243.5 46.6 L245.0 46.9 L246.0 47.1 L247.5 47.5 L248.5 47.7 L249.9 48.0 L251.0 48.3 L252.0 48.5 L253.5 48.9 L254.5 49.1 L256.0 49.5 L257.0 49.7 L258.0 50.0 L259.5 50.4 L260.5 50.7 L261.7 51.0 L263.0 51.4 L264.0 51.6 L265.2 52.0"/><path d="M0.0 38.2 L1.0 38.8 L2.0 39.3 L3.0 39.9 L4.0 40.4 L5.0 40.9 L6.0 41.4 L7.0 41.9 L8.0 42.3 L9.0 42.7 L10.0 43.1 L11.0 43.5 L12.3 44.0 L13.5 44.4 L14.5 44.7 L15.5 45.1 L17.0 45.5 L18.0 45.7 L19.0 46.0 L20.5 46.3 L21.5 46.5 L23.0 46.8 L24.0 47.0 L25.5 47.2 L27.0 47.4 L28.0 47.6 L29.5 47.7 L31.0 47.9 L32.5 48.0 L33.5 48.1 L35.0 48.1 L36.5 48.2 L38.0 48.3 L39.5 48.3 L41.0 48.4 L42.5 48.4 L44.0 48.5 L45.3 48.5 L46.5 48.5 L48.0 48.6 L49.5 48.7 L51.0 48.7 L52.5 48.8 L54.0 48.9 L55.0 49.0 L56.5 49.1 L58.0 49.3 L59.5 49.4 L60.5 49.5 L62.0 49.6 L63.5 49.8 L65.0 49.9 L66.5 49.9 L68.0 49.9 L69.5 49.9 L71.0 49.8 L72.5 49.7 L74.0 49.5 L75.0 49.3 L76.5 49.0 L77.5 48.8 L78.7 48.5 L80.0 48.1 L81.0 47.8 L82.1 47.5 L83.5 47.0 L84.5 46.7 L85.5 46.4 L86.6 46.0 L88.0 45.6 L89.0 45.3 L90.1 45.0 L91.5 44.7 L92.8 44.5 L94.0 44.4 L95.5 44.3 L97.0 44.3 L98.5 44.4 L99.5 44.5 L101.0 44.8 L102.2 45.0 L103.5 45.3 L104.5 45.5 L106.0 45.9 L107.0 46.2 L108.2 46.5 L109.5 46.8 L110.5 47.0 L112.0 47.3 L113.5 47.4 L115.0 47.5 L116.5 47.4 L118.0 47.2 L119.0 47.0 L120.5 46.6 L121.5 46.2 L122.5 45.7 L123.5 45.2 L124.5 44.7 L125.5 44.0 L126.2 43.5 L127.0 42.9 L128.0 42.0 L128.5 41.5 L129.3 40.5 L130.0 39.5 L130.3 38.5 L130.5 37.0 L130.2 35.5 L129.8 34.5 L129.3 33.5 L128.7 32.5 L128.1 31.5 L127.5 30.5 L127.0 29.6 L126.5 28.7 L126.0 27.7 L125.5 26.7 L125.0 25.5 L124.7 24.5 L124.4 23.5 L124.2 22.0 L124.2 20.5 L124.4 19.0 L124.7 18.0 L125.1 17.0 L125.6 16.0 L126.3 15.0 L127.0 14.2 L127.7 13.5 L128.5 12.8 L129.5 12.0 L130.2 11.5 L131.0 11.0 L132.0 10.5 L133.0 10.0 L134.1 9.5 L135.4 9.0 L136.5 8.6 L137.5 8.3 L138.8 8.0 L140.0 7.7 L141.3 7.5 L142.5 7.3 L144.0 7.2 L145.5 7.1 L147.0 7.0 L148.5 7.0 L150.0 7.1 L151.5 7.2 L153.0 7.4 L154.0 7.6 L155.5 7.9 L156.5 8.1 L157.7 8.5 L159.0 8.9 L160.0 9.3 L161.0 9.7 L162.0 10.2 L163.0 10.8 L164.0 11.4 L164.9 12.0 L165.6 12.5 L166.5 13.3 L167.2 14.0 L168.0 14.9 L168.5 15.6 L169.1 16.5 L169.6 17.5 L170.0 18.5 L170.4 20.0 L170.6 21.0 L170.6 22.5 L170.5 23.6 L170.2 25.0 L169.9 26.0 L169.5 27.2 L169.0 28.3 L168.5 29.2 L168.0 30.1 L167.5 31.0 L166.9 32.0 L166.3 33.0 L165.7 34.0 L165.2 35.0 L164.8 36.0 L164.7 37.5 L165.0 38.6 L165.6 39.5 L166.5 40.4 L167.2 41.0 L168.0 41.5 L169.0 42.1 L170.0 42.6 L171.0 43.0 L172.1 43.5 L173.4 44.0 L174.5 44.4 L175.5 44.7 L176.5 45.0 L178.0 45.5 L179.0 45.7 L180.1 46.0 L181.5 46.3 L182.5 46.5 L184.0 46.8 L185.0 47.0 L186.5 47.2 L188.0 47.4 L189.0 47.5 L190.5 47.6 L192.0 47.7 L193.5 47.8 L195.0 47.8 L196.5 47.8 L198.0 47.8 L199.5 47.8 L201.0 47.7 L202.5 47.6 L204.0 47.5 L205.0 47.5 L206.5 47.4 L208.0 47.3 L209.5 47.2 L211.0 47.1 L212.5 47.0 L213.5 47.0 L215.0 46.9 L216.5 46.9 L218.0 46.9 L219.5 46.9 L221.0 46.9 L222.5 47.0 L223.5 47.0 L225.0 47.1 L226.5 47.2 L228.0 47.3 L229.5 47.5 L230.5 47.6 L232.0 47.8 L233.5 48.0 L234.5 48.1 L236.0 48.4 L237.0 48.5 L238.5 48.8 L239.6 49.0 L241.0 49.3 L242.1 49.5 L243.5 49.8 L244.5 50.0 L246.0 50.4 L247.0 50.6 L248.4 51.0 L249.5 51.3 L250.5 51.5 L252.0 52.0 L253.0 52.3 L254.0 52.6 L255.5 53.0 L256.5 53.3 L257.5 53.7 L258.5 54.0 L260.0 54.5 L261.0 54.9 L262.0 55.2 L263.0 55.6 L264.1 56.0 L265.4 56.5"/><path d="M0.0 41.6 L1.0 42.1 L2.0 42.6 L3.0 43.1 L4.0 43.5 L5.1 44.0 L6.2 44.5 L7.5 45.0 L8.5 45.4 L9.5 45.8 L10.5 46.1 L11.6 46.5 L13.0 46.9 L14.0 47.2 L15.0 47.5 L16.5 47.9 L17.5 48.1 L19.0 48.5 L20.0 48.7 L21.5 49.0 L22.5 49.2 L24.0 49.4 L25.0 49.5 L26.5 49.7 L28.0 49.9 L29.0 50.0 L30.5 50.2 L32.0 50.3 L33.5 50.4 L35.0 50.5 L36.0 50.5 L37.5 50.6 L39.0 50.7 L40.5 50.7 L42.0 50.8 L43.5 50.9 L45.0 50.9 L46.3 51.0 L47.5 51.1 L49.0 51.2 L50.5 51.3 L52.0 51.4 L53.0 51.5 L54.5 51.7 L56.0 51.9 L57.0 52.0 L58.5 52.2 L60.0 52.4 L61.0 52.5 L62.5 52.7 L64.0 52.9 L65.3 53.0 L66.5 53.1 L68.0 53.1 L69.5 53.2 L71.0 53.1 L72.5 53.0 L73.5 52.9 L75.0 52.7 L76.5 52.5 L77.5 52.3 L79.0 52.1 L80.0 51.8 L81.5 51.5 L82.5 51.3 L83.6 51.0 L85.0 50.7 L86.0 50.4 L87.5 50.1 L88.5 49.9 L90.0 49.6 L91.0 49.4 L92.5 49.2 L94.0 49.0 L95.0 49.0 L96.5 49.0 L97.5 49.0 L99.0 49.2 L100.5 49.4 L101.5 49.6 L103.0 50.0 L104.0 50.2 L105.0 50.5 L106.5 51.0 L107.5 51.3 L108.5 51.5 L110.0 51.9 L111.0 52.2 L112.5 52.5 L113.5 52.6 L115.0 52.8 L116.5 52.8 L118.0 52.8 L119.5 52.6 L120.5 52.4 L122.0 52.0 L123.0 51.7 L124.0 51.3 L125.0 50.8 L126.0 50.3 L127.0 49.8 L128.0 49.1 L129.0 48.5 L129.7 48.0 L130.5 47.5 L131.5 46.7 L132.5 46.0 L133.1 45.5 L134.0 44.8 L135.0 44.0 L135.6 43.5 L136.5 42.7 L137.1 42.0 L137.9 41.0 L138.2 40.0 L138.0 38.5 L137.5 37.5 L137.0 36.8 L136.3 36.0 L135.5 35.1 L134.9 34.5 L134.0 33.6 L133.5 33.0 L132.5 32.0 L132.0 31.4 L131.2 30.5 L130.5 29.6 L130.0 29.0 L129.3 28.0 L128.7 27.0 L128.2 26.0 L127.7 25.0 L127.3 24.0 L127.0 22.7 L126.8 21.5 L126.9 20.0 L127.0 19.0 L127.5 17.6 L128.0 16.6 L128.5 15.8 L129.1 15.0 L130.0 14.0 L130.6 13.5 L131.5 12.8 L132.5 12.1 L133.5 11.5 L134.5 11.0 L135.5 10.5 L136.5 10.1 L137.5 9.8 L138.5 9.5 L140.0 9.1 L141.0 8.9 L142.5 8.6 L143.5 8.5 L145.0 8.3 L146.5 8.3 L148.0 8.2 L149.5 8.3 L151.0 8.4 L152.0 8.5 L153.5 8.8 L154.6 9.0 L156.0 9.3 L157.0 9.6 L158.1 10.0 L159.3 10.5 L160.4 11.0 L161.4 11.5 L162.2 12.0 L163.0 12.5 L164.0 13.3 L164.8 14.0 L165.5 14.7 L166.2 15.5 L166.9 16.5 L167.4 17.5 L167.8 18.5 L168.1 19.5 L168.4 21.0 L168.3 22.5 L168.1 24.0 L167.8 25.0 L167.4 26.0 L166.9 27.0 L166.3 28.0 L165.6 29.0 L165.0 29.7 L164.3 30.5 L163.5 31.4 L162.9 32.0 L162.0 32.9 L161.3 33.5 L160.5 34.3 L159.7 35.0 L159.0 35.6 L158.0 36.5 L157.5 37.1 L156.7 38.0 L156.2 39.0 L156.1 40.5 L156.7 41.5 L157.5 42.3 L158.3 43.0 L159.0 43.5 L160.0 44.2 L161.0 44.8 L162.0 45.4 L163.0 45.9 L164.0 46.5 L165.0 47.0 L166.0 47.5 L166.9 48.0 L167.9 48.5 L168.9 49.0 L170.0 49.5 L171.0 50.0 L172.0 50.4 L173.0 50.8 L174.0 51.2 L175.0 51.6 L176.3 52.0 L177.5 52.4 L178.5 52.6 L180.0 53.0 L181.0 53.2 L182.5 53.5 L183.5 53.6 L185.0 53.8 L186.5 53.9 L187.5 54.0 L189.0 54.1 L190.5 54.1 L192.0 54.1 L193.5 54.0 L194.5 54.0 L196.0 53.8 L197.5 53.7 L198.7 53.5 L200.0 53.3 L201.5 53.1 L202.5 52.9 L204.0 52.7 L205.0 52.5 L206.5 52.2 L208.0 52.0 L209.0 51.8 L210.5 51.6 L211.5 51.5 L213.0 51.3 L214.5 51.1 L215.5 51.0 L217.0 50.9 L218.5 50.8 L220.0 50.7 L221.5 50.7 L223.0 50.7 L224.5 50.7 L226.0 50.7 L227.5 50.8 L229.0 50.9 L230.0 51.0 L231.5 51.2 L233.0 51.3 L234.2 51.5 L235.5 51.7 L237.0 51.9 L238.0 52.1 L239.5 52.4 L240.5 52.6 L242.0 53.0 L243.0 53.2 L244.1 53.5 L245.5 53.9 L246.5 54.2 L247.7 54.5 L249.0 54.9 L250.0 55.2 L251.0 55.6 L252.2 56.0 L253.5 56.5 L254.5 56.9 L255.5 57.3 L256.5 57.7 L257.5 58.1 L258.5 58.5 L259.6 59.0 L260.6 59.5 L261.7 60.0 L262.7 60.5 L263.6 61.0 L264.6 61.5 L265.5 62.0"/><path d="M149.0 35.5 L147.5 35.6 L146.0 35.5 L145.0 35.4 L143.5 35.1 L142.5 34.8 L141.5 34.5 L140.4 34.0 L139.3 33.5 L138.4 33.0 L137.5 32.4 L136.5 31.8 L135.5 31.0 L134.8 30.5 L134.0 29.8 L133.2 29.0 L132.5 28.2 L131.9 27.5 L131.2 26.5 L130.6 25.5 L130.1 24.5 L129.7 23.5 L129.5 22.5 L129.3 21.0 L129.4 19.5 L129.6 18.5 L130.0 17.5 L130.6 16.5 L131.3 15.5 L132.0 14.7 L132.8 14.0 L133.5 13.5 L134.5 12.8 L135.5 12.2 L136.5 11.7 L137.5 11.3 L138.5 10.9 L139.9 10.5 L141.0 10.2 L142.0 10.0 L143.5 9.7 L145.0 9.6 L146.0 9.5 L147.5 9.5 L149.0 9.5 L150.0 9.5 L151.5 9.7 L153.0 9.9 L154.0 10.1 L155.4 10.5 L156.5 10.8 L157.5 11.2 L158.5 11.6 L159.5 12.1 L160.5 12.7 L161.5 13.3 L162.4 14.0 L163.0 14.5 L164.0 15.5 L164.5 16.2 L165.0 17.0 L165.6 18.0 L166.0 19.3 L166.2 20.5 L166.2 22.0 L166.0 23.4 L165.6 24.5 L165.2 25.5 L164.6 26.5 L164.0 27.4 L163.5 28.0 L162.6 29.0 L162.0 29.6 L161.0 30.4 L160.2 31.0 L159.5 31.5 L158.5 32.2 L157.5 32.7 L156.5 33.3 L155.5 33.7 L154.5 34.2 L153.5 34.5 L152.0 35.0 L151.0 35.2 L149.5 35.5"/><path d="M0.0 44.9 L1.0 45.3 L2.0 45.8 L3.0 46.2 L4.0 46.6 L5.0 47.0 L6.4 47.5 L7.5 47.9 L8.5 48.2 L9.5 48.6 L10.9 49.0 L12.0 49.3 L13.0 49.6 L14.5 50.0 L15.5 50.2 L16.6 50.5 L18.0 50.8 L19.0 51.0 L20.5 51.3 L21.9 51.5 L23.0 51.7 L24.5 51.9 L25.5 52.0 L27.0 52.2 L28.5 52.3 L30.0 52.4 L31.0 52.5 L32.5 52.6 L34.0 52.7 L35.5 52.8 L37.0 52.9 L38.5 53.0 L39.5 53.0 L41.0 53.1 L42.5 53.2 L44.0 53.3 L45.5 53.4 L47.0 53.5 L48.0 53.6 L49.5 53.7 L51.0 53.9 L52.1 54.0 L53.5 54.2 L55.0 54.4 L56.0 54.5 L57.5 54.8 L59.0 55.0 L60.0 55.2 L61.5 55.4 L62.5 55.5 L64.0 55.7 L65.5 55.8 L67.0 55.9 L68.5 55.9 L70.0 55.9 L71.5 55.8 L73.0 55.7 L74.5 55.5 L75.5 55.4 L77.0 55.2 L78.0 55.0 L79.5 54.8 L81.0 54.5 L82.0 54.3 L83.5 54.1 L84.5 53.9 L86.0 53.7 L87.1 53.5 L88.5 53.3 L90.0 53.2 L91.5 53.0 L92.5 53.0 L94.0 53.0 L95.0 53.0 L96.5 53.1 L98.0 53.3 L99.2 53.5 L100.5 53.8 L101.5 54.0 L103.0 54.4 L104.0 54.8 L105.0 55.1 L106.3 55.5 L107.5 55.9 L108.5 56.2 L109.5 56.6 L111.0 57.0 L112.0 57.3 L113.1 57.5 L114.5 57.8 L116.0 57.9 L117.0 58.0 L118.5 58.0 L119.5 58.0 L121.0 57.9 L122.5 57.7 L123.5 57.5 L125.0 57.1 L126.0 56.8 L127.0 56.5 L128.5 56.0 L129.5 55.6 L130.5 55.2 L131.5 54.8 L132.5 54.3 L133.5 53.9 L134.5 53.4 L135.5 52.9 L136.5 52.5 L137.5 52.0 L138.7 51.5 L140.0 51.0 L141.0 50.7 L142.0 50.4 L143.5 50.1 L144.5 50.0 L146.0 49.9 L147.0 50.0 L148.5 50.3 L149.5 50.5 L150.8 51.0 L152.0 51.5 L153.0 52.0 L154.0 52.5 L154.9 53.0 L155.8 53.5 L156.7 54.0 L157.7 54.5 L158.6 55.0 L159.6 55.5 L160.6 56.0 L161.7 56.5 L162.9 57.0 L164.0 57.5 L165.0 57.8 L166.0 58.2 L167.0 58.5 L168.5 59.0 L169.5 59.3 L170.5 59.6 L172.0 60.0 L173.0 60.2 L174.2 60.5 L175.5 60.8 L176.5 61.0 L178.0 61.3 L179.3 61.5 L180.5 61.7 L182.0 61.9 L183.0 62.0 L184.5 62.2 L186.0 62.3 L187.5 62.5 L188.5 62.5 L190.0 62.5 L191.5 62.5 L192.5 62.5 L194.0 62.3 L195.5 62.1 L196.5 61.9 L198.0 61.6 L199.0 61.3 L200.0 61.0 L201.4 60.5 L202.5 60.1 L203.5 59.7 L204.5 59.3 L205.5 59.0 L206.7 58.5 L208.0 58.0 L209.0 57.7 L210.0 57.3 L211.1 57.0 L212.5 56.6 L213.5 56.3 L214.9 56.0 L216.0 55.8 L217.4 55.5 L218.5 55.3 L220.0 55.1 L221.3 55.0 L222.5 54.9 L224.0 54.8 L225.5 54.8 L227.0 54.8 L228.5 54.9 L230.0 55.0 L231.0 55.0 L232.5 55.2 L234.0 55.4 L235.0 55.5 L236.5 55.8 L237.5 56.0 L239.0 56.3 L240.0 56.6 L241.5 57.0 L242.5 57.2 L243.5 57.5 L244.9 58.0 L246.0 58.4 L247.0 58.7 L248.0 59.1 L249.0 59.5 L250.1 60.0 L251.2 60.5 L252.2 61.0 L253.2 61.5 L254.2 62.0 L255.1 62.5 L256.0 63.0 L257.0 63.6 L258.0 64.3 L259.0 64.9 L259.9 65.5 L260.6 66.0 L261.5 66.6 L262.5 67.3 L263.4 68.0 L264.1 68.5 L265.0 69.2 L266.0 69.9"/><path d="M150.5 32.6 L149.0 32.7 L147.5 32.7 L146.0 32.7 L144.8 32.5 L143.5 32.2 L142.5 32.0 L141.1 31.5 L140.0 31.0 L139.0 30.5 L138.0 30.0 L137.3 29.5 L136.5 28.9 L135.5 28.1 L134.8 27.5 L134.0 26.6 L133.5 25.9 L132.9 25.0 L132.4 24.0 L132.0 23.0 L131.6 21.5 L131.6 20.0 L132.0 18.5 L132.4 17.5 L133.0 16.5 L133.5 15.9 L134.4 15.0 L135.0 14.5 L136.0 13.8 L137.0 13.2 L138.0 12.7 L139.0 12.2 L140.0 11.9 L141.3 11.5 L142.5 11.2 L143.6 11.0 L145.0 10.8 L146.5 10.7 L148.0 10.7 L149.5 10.7 L151.0 10.9 L152.0 11.0 L153.5 11.3 L154.5 11.6 L155.9 12.0 L157.0 12.4 L158.0 12.9 L159.0 13.4 L159.9 14.0 L160.6 14.5 L161.5 15.3 L162.2 16.0 L162.9 17.0 L163.5 18.0 L163.9 19.0 L164.1 20.0 L164.2 21.5 L164.0 22.8 L163.6 24.0 L163.1 25.0 L162.5 26.0 L162.0 26.6 L161.2 27.5 L160.5 28.1 L159.5 28.9 L158.7 29.5 L157.9 30.0 L157.0 30.5 L155.9 31.0 L154.7 31.5 L153.5 31.9 L152.5 32.2 L151.0 32.5"/><path d="M0.0 48.2 L1.0 48.6 L2.1 49.0 L3.5 49.5 L4.5 49.8 L5.5 50.2 L6.5 50.5 L8.0 51.0 L9.0 51.3 L10.0 51.5 L11.5 51.9 L12.5 52.2 L13.8 52.5 L15.0 52.8 L16.1 53.0 L17.5 53.3 L18.8 53.5 L20.0 53.7 L21.5 53.9 L22.5 54.1 L24.0 54.3 L25.5 54.4 L26.5 54.5 L28.0 54.7 L29.5 54.8 L31.0 54.9 L32.5 55.0 L33.5 55.0 L35.0 55.1 L36.5 55.2 L38.0 55.3 L39.5 55.3 L41.0 55.4 L42.3 55.5 L43.5 55.6 L45.0 55.7 L46.5 55.8 L48.0 56.0 L49.0 56.1 L50.5 56.3 L52.0 56.5 L53.0 56.6 L54.5 56.9 L55.5 57.0 L57.0 57.3 L58.4 57.5 L59.5 57.7 L61.0 57.9 L62.0 58.0 L63.5 58.2 L65.0 58.3 L66.5 58.3 L68.0 58.3 L69.5 58.3 L71.0 58.2 L72.5 58.0 L73.5 57.9 L75.0 57.7 L76.2 57.5 L77.5 57.3 L79.0 57.1 L80.0 56.9 L81.5 56.7 L82.9 56.5 L84.0 56.4 L85.5 56.2 L87.0 56.1 L88.0 56.0 L89.5 55.9 L91.0 55.9 L92.5 56.0 L93.5 56.0 L95.0 56.2 L96.5 56.4 L97.5 56.6 L99.0 57.0 L100.0 57.3 L101.0 57.6 L102.3 58.0 L103.5 58.5 L104.5 58.8 L105.5 59.3 L106.5 59.7 L107.5 60.1 L108.6 60.5 L109.9 61.0 L111.0 61.4 L112.0 61.7 L113.0 62.0 L114.5 62.4 L115.5 62.6 L117.0 62.8 L118.5 62.9 L120.0 63.0 L121.5 62.9 L123.0 62.8 L124.5 62.7 L125.8 62.5 L127.0 62.3 L128.5 62.1 L129.5 61.9 L131.0 61.6 L132.0 61.4 L133.5 61.2 L134.5 61.0 L136.0 60.8 L137.5 60.6 L139.0 60.5 L140.0 60.5 L141.3 60.5 L142.5 60.5 L144.0 60.7 L145.5 60.9 L146.5 61.0 L148.0 61.3 L149.0 61.5 L150.5 61.9 L151.5 62.1 L152.8 62.5 L154.0 62.8 L155.0 63.1 L156.3 63.5 L157.5 63.9 L158.5 64.2 L159.6 64.5 L161.0 64.9 L162.0 65.2 L163.0 65.5 L164.5 66.0 L165.5 66.3 L166.5 66.6 L168.0 67.0 L169.0 67.3 L170.0 67.6 L171.4 68.0 L172.5 68.3 L173.5 68.6 L174.8 69.0 L176.0 69.4 L177.0 69.7 L178.1 70.0 L179.5 70.5 L180.5 70.8 L181.5 71.1 L182.5 71.5 L183.8 72.0 L185.0 72.5 L186.0 72.9 L187.0 73.3 L188.0 73.7 L189.0 74.2 L190.0 74.7 L191.0 75.1 L192.0 75.6 L193.0 76.1 L194.0 76.5 L195.2 77.0 L196.5 77.5 L197.5 77.7 L199.0 78.0 L200.0 78.0 L201.0 77.9 L202.3 77.5 L203.3 77.0 L204.0 76.4 L204.9 75.5 L205.5 74.8 L206.0 74.0 L206.6 73.0 L207.2 72.0 L207.8 71.0 L208.5 70.0 L209.0 69.2 L209.5 68.5 L210.3 67.5 L211.0 66.7 L211.7 66.0 L212.5 65.3 L213.5 64.5 L214.2 64.0 L215.0 63.5 L216.0 62.9 L217.0 62.4 L218.0 62.0 L219.3 61.5 L220.5 61.1 L221.5 60.9 L223.0 60.5 L224.0 60.4 L225.5 60.2 L227.0 60.1 L228.5 60.1 L230.0 60.1 L231.5 60.2 L233.0 60.4 L234.0 60.6 L235.5 60.8 L236.5 61.1 L238.0 61.4 L239.0 61.7 L240.0 62.1 L241.2 62.5 L242.5 63.0 L243.5 63.5 L244.5 63.9 L245.5 64.5 L246.5 65.0 L247.3 65.5 L248.1 66.0 L249.0 66.6 L250.0 67.3 L250.9 68.0 L251.5 68.5 L252.5 69.4 L253.2 70.0 L254.0 70.7 L254.8 71.5 L255.5 72.1 L256.4 73.0 L257.0 73.6 L258.0 74.5 L258.5 75.0 L259.5 75.9 L260.1 76.5 L261.0 77.2 L261.9 78.0 L262.5 78.5 L263.5 79.2 L264.5 80.0 L265.3 80.5"/><path d="M150.0 30.5 L148.5 30.6 L147.0 30.6 L145.7 30.5 L144.5 30.3 L143.2 30.0 L142.0 29.6 L141.0 29.2 L140.0 28.7 L139.0 28.2 L138.0 27.5 L137.4 27.0 L136.5 26.2 L135.9 25.5 L135.1 24.5 L134.6 23.5 L134.2 22.5 L134.0 21.5 L133.9 20.0 L134.1 19.0 L134.5 18.0 L135.1 17.0 L136.0 16.0 L136.5 15.5 L137.5 14.7 L138.5 14.1 L139.5 13.6 L140.5 13.2 L141.5 12.9 L142.8 12.5 L144.0 12.3 L145.5 12.0 L146.5 12.0 L148.0 11.9 L149.5 12.0 L150.5 12.1 L152.0 12.3 L153.0 12.5 L154.5 12.9 L155.5 13.3 L156.5 13.7 L157.5 14.3 L158.5 14.9 L159.3 15.5 L160.0 16.2 L160.7 17.0 L161.4 18.0 L161.8 19.0 L162.1 20.0 L162.1 21.5 L161.9 22.5 L161.5 23.7 L161.0 24.6 L160.4 25.5 L159.5 26.4 L158.8 27.0 L158.0 27.6 L157.0 28.3 L156.0 28.8 L155.0 29.3 L154.0 29.7 L152.9 30.0 L151.5 30.3 L150.3 30.5"/><path d="M0.0 51.5 L1.5 52.0 L2.5 52.3 L3.5 52.6 L4.7 53.0 L6.0 53.4 L7.0 53.7 L8.3 54.0 L9.5 54.3 L10.5 54.6 L12.0 54.9 L13.0 55.1 L14.5 55.4 L15.5 55.6 L17.0 55.9 L18.0 56.0 L19.5 56.2 L21.0 56.4 L22.0 56.6 L23.5 56.7 L25.0 56.9 L26.5 57.0 L27.5 57.1 L29.0 57.2 L30.5 57.3 L32.0 57.4 L33.5 57.4 L34.9 57.5 L36.0 57.5 L37.5 57.6 L39.0 57.7 L40.5 57.8 L42.0 57.9 L43.5 58.0 L44.5 58.1 L46.0 58.2 L47.5 58.3 L48.8 58.5 L50.0 58.7 L51.5 58.9 L52.5 59.0 L54.0 59.3 L55.3 59.5 L56.5 59.7 L58.0 60.0 L59.0 60.1 L60.5 60.3 L62.0 60.5 L63.0 60.6 L64.5 60.6 L66.0 60.6 L67.5 60.6 L68.5 60.5 L70.0 60.3 L71.5 60.1 L72.5 60.0 L74.0 59.8 L75.5 59.5 L76.5 59.3 L78.0 59.1 L79.0 58.9 L80.5 58.7 L82.0 58.5 L83.0 58.4 L84.5 58.2 L86.0 58.1 L87.5 58.1 L89.0 58.1 L90.5 58.1 L92.0 58.3 L93.5 58.4 L94.5 58.6 L96.0 58.9 L97.0 59.2 L98.0 59.5 L99.5 60.0 L100.5 60.4 L101.5 60.8 L102.5 61.2 L103.5 61.7 L104.5 62.2 L105.5 62.7 L106.5 63.2 L107.5 63.8 L108.5 64.3 L109.5 64.8 L110.5 65.3 L111.5 65.7 L112.5 66.1 L113.5 66.5 L115.0 67.0 L116.0 67.2 L117.3 67.5 L118.5 67.7 L120.0 67.8 L121.5 67.9 L123.0 67.9 L124.5 67.9 L126.0 67.8 L127.5 67.7 L129.0 67.6 L130.0 67.5 L131.5 67.4 L133.0 67.3 L134.5 67.2 L136.0 67.2 L137.5 67.2 L139.0 67.2 L140.5 67.3 L142.0 67.5 L143.0 67.6 L144.5 67.8 L145.5 68.0 L147.0 68.3 L148.0 68.6 L149.5 68.9 L150.5 69.2 L151.6 69.5 L153.0 69.9 L154.0 70.2 L155.0 70.5 L156.5 71.0 L157.5 71.3 L158.5 71.7 L159.5 72.0 L160.8 72.5 L162.0 72.9 L163.0 73.3 L164.0 73.7 L165.0 74.1 L166.1 74.5 L167.3 75.0 L168.5 75.5 L169.5 75.9 L170.5 76.3 L171.5 76.8 L172.5 77.2 L173.5 77.7 L174.5 78.2 L175.5 78.7 L176.5 79.2 L177.5 79.7 L178.5 80.3 L179.5 80.8 L180.5 81.4 L181.4 82.0 L182.2 82.5 L183.0 83.0 L184.0 83.6 L185.0 84.3 L186.0 85.0 L186.8 85.5 L187.5 86.0 L188.5 86.6 L189.5 87.3 L190.5 87.9 L191.5 88.5 L192.4 89.0 L193.3 89.5 L194.3 90.0 L195.4 90.5 L196.5 91.0 L197.5 91.3 L198.5 91.6 L200.0 92.0 L201.0 92.2 L202.5 92.4 L204.0 92.4 L205.5 92.4 L207.0 92.2 L208.5 92.0 L209.5 91.8 L210.5 91.5 L212.0 91.0 L213.0 90.7 L214.0 90.3 L215.0 89.8 L216.0 89.3 L217.0 88.8 L218.0 88.2 L219.0 87.6 L219.9 87.0 L220.6 86.5 L221.5 85.8 L222.4 85.0 L223.0 84.5 L224.0 83.5 L224.5 82.9 L225.3 82.0 L225.9 81.0 L226.5 80.1 L227.0 79.1 L227.5 78.0 L228.0 77.0 L228.5 76.0 L229.0 75.3 L229.8 74.5 L230.8 74.0 L232.0 73.8 L233.3 74.0 L234.5 74.5 L235.4 75.0 L236.1 75.5 L237.0 76.3 L237.8 77.0 L238.5 77.7 L239.3 78.5 L240.0 79.1 L241.0 80.0 L241.7 80.5 L242.5 81.1 L243.5 81.8 L244.5 82.5 L245.4 83.0 L246.3 83.5 L247.2 84.0 L248.2 84.5 L249.2 85.0 L250.2 85.5 L251.4 86.0 L252.5 86.5 L253.5 86.9 L254.5 87.3 L255.5 87.7 L256.5 88.1 L257.5 88.5 L258.8 89.0 L260.0 89.5 L261.0 89.8 L262.0 90.2 L263.0 90.6 L264.2 91.0 L265.5 91.5"/><path d="M151.0 28.5 L149.5 28.7 L148.0 28.8 L146.5 28.7 L145.2 28.5 L144.0 28.2 L143.0 27.9 L141.9 27.5 L140.9 27.0 L140.0 26.4 L139.0 25.7 L138.3 25.0 L137.5 24.1 L137.0 23.3 L136.5 22.1 L136.3 21.0 L136.4 19.5 L136.7 18.5 L137.3 17.5 L138.0 16.7 L138.8 16.0 L139.5 15.5 L140.5 14.9 L141.5 14.5 L142.8 14.0 L144.0 13.7 L145.0 13.5 L146.5 13.3 L148.0 13.2 L149.5 13.3 L151.0 13.5 L152.0 13.7 L153.2 14.0 L154.5 14.4 L155.5 14.9 L156.5 15.5 L157.2 16.0 L158.0 16.7 L158.8 17.5 L159.4 18.5 L159.8 19.5 L160.0 21.0 L159.7 22.5 L159.2 23.5 L158.6 24.5 L158.0 25.1 L157.0 26.0 L156.3 26.5 L155.5 27.0 L154.4 27.5 L153.1 28.0 L152.0 28.3 L151.0 28.5"/><path d="M0.0 55.0 L1.0 55.2 L2.0 55.5 L3.5 55.9 L4.5 56.2 L5.8 56.5 L7.0 56.8 L8.0 57.0 L9.5 57.3 L10.5 57.6 L12.0 57.8 L13.0 58.0 L14.5 58.3 L15.9 58.5 L17.0 58.7 L18.5 58.9 L19.6 59.0 L21.0 59.1 L22.5 59.3 L24.0 59.4 L25.0 59.5 L26.5 59.6 L28.0 59.7 L29.5 59.8 L31.0 59.8 L32.5 59.9 L34.0 60.0 L35.1 60.0 L36.5 60.1 L38.0 60.1 L39.5 60.2 L41.0 60.3 L42.5 60.4 L44.0 60.5 L45.0 60.6 L46.5 60.7 L48.0 60.9 L49.0 61.0 L50.5 61.2 L52.0 61.5 L53.0 61.7 L54.5 61.9 L55.5 62.1 L57.0 62.3 L58.2 62.5 L59.5 62.7 L61.0 62.8 L62.5 62.9 L64.0 62.9 L65.5 62.8 L67.0 62.7 L68.5 62.5 L69.5 62.3 L71.0 62.1 L72.0 61.9 L73.5 61.6 L74.5 61.4 L76.0 61.1 L77.0 60.9 L78.5 60.6 L79.5 60.4 L81.0 60.2 L82.5 60.0 L83.5 59.9 L85.0 59.8 L86.5 59.8 L88.0 59.8 L89.5 59.9 L90.7 60.0 L92.0 60.2 L93.5 60.4 L94.5 60.7 L95.7 61.0 L97.0 61.4 L98.0 61.8 L99.0 62.2 L100.0 62.7 L101.0 63.2 L102.0 63.7 L103.0 64.3 L104.0 64.9 L105.0 65.5 L105.7 66.0 L106.5 66.5 L107.5 67.2 L108.5 67.9 L109.4 68.5 L110.2 69.0 L111.0 69.5 L112.0 70.1 L113.0 70.6 L114.0 71.1 L115.0 71.5 L116.3 72.0 L117.5 72.4 L118.5 72.6 L120.0 72.8 L121.4 73.0 L122.5 73.1 L124.0 73.2 L125.5 73.2 L127.0 73.2 L128.5 73.2 L130.0 73.2 L131.5 73.2 L133.0 73.3 L134.5 73.4 L136.0 73.5 L137.0 73.5 L138.5 73.7 L140.0 73.9 L141.0 74.1 L142.5 74.4 L143.5 74.6 L145.0 74.9 L146.0 75.2 L147.1 75.5 L148.5 75.9 L149.5 76.2 L150.5 76.6 L151.8 77.0 L153.0 77.5 L154.0 77.8 L155.0 78.2 L156.0 78.6 L157.0 79.0 L158.1 79.5 L159.2 80.0 L160.4 80.5 L161.4 81.0 L162.5 81.5 L163.5 82.0 L164.5 82.5 L165.5 82.9 L166.5 83.4 L167.5 84.0 L168.5 84.5 L169.5 85.0 L170.4 85.5 L171.4 86.0 L172.3 86.5 L173.2 87.0 L174.0 87.5 L175.0 88.0 L176.0 88.6 L177.0 89.2 L178.0 89.8 L179.0 90.4 L180.0 91.0 L180.8 91.5 L181.7 92.0 L182.5 92.5 L183.5 93.1 L184.5 93.7 L185.5 94.2 L186.5 94.8 L187.5 95.3 L188.5 95.9"/><path d="M151.0 26.6 L149.5 26.8 L148.0 26.9 L146.5 26.8 L145.1 26.5 L144.0 26.2 L143.0 25.8 L142.0 25.2 L141.0 24.5 L140.4 24.0 L139.6 23.0 L139.1 22.0 L138.9 21.0 L139.0 19.5 L139.4 18.5 L140.0 17.7 L140.8 17.0 L141.5 16.5 L142.5 15.9 L143.5 15.5 L145.0 15.1 L146.0 14.9 L147.5 14.8 L149.0 14.8 L150.5 14.9 L151.5 15.1 L152.7 15.5 L153.9 16.0 L154.8 16.5 L155.5 17.0 L156.5 18.0 L157.0 18.7 L157.5 20.0 L157.5 21.0 L157.3 22.0 L156.9 23.0 L156.1 24.0 L155.5 24.5 L154.5 25.3 L153.5 25.8 L152.5 26.2 L151.5 26.5"/><path d="M0.0 58.6 L1.5 58.9 L2.5 59.1 L4.0 59.5 L5.0 59.7 L6.5 60.0 L7.5 60.2 L9.0 60.5 L10.0 60.6 L11.5 60.9 L12.5 61.1 L14.0 61.3 L15.5 61.5 L16.5 61.6 L18.0 61.8 L19.5 61.9 L20.5 62.0 L22.0 62.1 L23.5 62.2 L25.0 62.3 L26.5 62.4 L28.0 62.5 L29.4 62.5 L30.5 62.5 L32.0 62.6 L33.5 62.6 L35.0 62.7 L36.5 62.7 L38.0 62.8 L39.5 62.8 L41.0 62.9 L42.5 63.0 L43.5 63.1 L45.0 63.2 L46.5 63.4 L47.7 63.5 L49.0 63.7 L50.5 63.9 L51.5 64.1 L53.0 64.3 L54.2 64.5 L55.5 64.7 L57.0 64.9 L58.0 65.1 L59.5 65.2 L61.0 65.3 L62.5 65.2 L64.0 65.1 L65.1 65.0 L66.5 64.8 L67.9 64.5 L69.0 64.3 L70.1 64.0 L71.5 63.6 L72.5 63.4 L74.0 63.0 L75.0 62.8 L76.2 62.5 L77.5 62.2 L78.7 62.0 L80.0 61.8 L81.5 61.6 L82.5 61.5 L84.0 61.3 L85.5 61.3 L87.0 61.3 L88.5 61.3 L90.0 61.5 L91.0 61.6 L92.5 61.9 L93.5 62.2 L94.6 62.5 L96.0 63.0 L97.0 63.4 L98.0 63.8 L99.0 64.3 L100.0 64.9 L101.0 65.5 L101.8 66.0 L102.5 66.5 L103.5 67.2 L104.5 68.0 L105.1 68.5 L106.0 69.3 L106.8 70.0 L107.5 70.6 L108.5 71.5 L109.0 72.0 L110.0 72.9 L110.7 73.5 L111.5 74.1 L112.5 74.9 L113.3 75.5 L114.1 76.0 L115.0 76.5 L116.0 77.0 L117.3 77.5 L118.5 77.9 L119.5 78.1 L121.0 78.4 L122.0 78.6 L123.5 78.8 L125.0 78.9 L126.2 79.0 L127.5 79.1 L129.0 79.2 L130.5 79.4 L131.8 79.5 L133.0 79.6 L134.5 79.8 L135.5 80.0 L137.0 80.3 L138.2 80.5 L139.5 80.8 L140.5 81.0 L142.0 81.4 L143.0 81.7 L144.0 82.0 L145.5 82.5 L146.5 82.8 L147.5 83.2 L148.5 83.6 L149.6 84.0 L150.8 84.5 L152.0 85.0 L153.0 85.4 L154.0 85.9 L155.0 86.4 L156.0 86.8 L157.0 87.3 L158.0 87.8 L159.0 88.3 L160.0 88.8 L161.0 89.3 L162.0 89.9 L163.0 90.4 L164.0 90.9 L165.0 91.5 L166.0 92.0 L166.9 92.5 L167.8 93.0 L168.8 93.5 L169.7 94.0 L170.6 94.5 L171.5 95.0 L172.5 95.5"/><path d="M150.0 24.6 L148.5 24.7 L147.0 24.6 L146.0 24.4 L144.8 24.0 L143.9 23.5 L143.0 22.8 L142.4 22.0 L142.0 20.5 L142.5 19.0 L143.0 18.4 L144.0 17.7 L145.0 17.2 L146.0 16.9 L147.5 16.7 L149.0 16.7 L150.5 16.9 L151.5 17.2 L152.5 17.7 L153.5 18.4 L154.0 19.0 L154.5 20.3 L154.5 21.1 L154.0 22.3 L153.4 23.0 L152.5 23.6 L151.5 24.1 L150.3 24.5"/><path d="M0.0 62.3 L1.0 62.5 L2.5 62.8 L3.5 63.0 L5.0 63.3 L6.4 63.5 L7.5 63.7 L9.0 63.9 L10.0 64.1 L11.5 64.3 L13.0 64.5 L14.0 64.6 L15.5 64.7 L17.0 64.9 L18.3 65.0 L19.5 65.1 L21.0 65.2 L22.5 65.3 L24.0 65.4 L25.5 65.4 L27.0 65.5 L28.5 65.5 L29.5 65.5 L31.0 65.5 L32.5 65.6 L34.0 65.6 L35.5 65.6 L37.0 65.6 L38.5 65.7 L40.0 65.7 L41.5 65.8 L43.0 65.9 L44.4 66.0 L45.5 66.1 L47.0 66.3 L48.5 66.5 L49.5 66.6 L51.0 66.8 L52.0 67.0 L53.5 67.2 L55.0 67.5 L56.0 67.6 L57.5 67.7 L59.0 67.8 L60.5 67.8 L62.0 67.7 L63.3 67.5 L64.5 67.3 L65.6 67.0 L67.0 66.6 L68.0 66.3 L69.1 66.0 L70.5 65.6 L71.5 65.2 L72.5 64.9 L73.9 64.5 L75.0 64.2 L76.0 63.9 L77.5 63.6 L78.5 63.3 L80.0 63.1 L81.0 62.9 L82.5 62.7 L84.0 62.6 L85.5 62.6 L87.0 62.6 L88.5 62.7 L90.0 62.9 L91.0 63.1 L92.5 63.4 L93.5 63.7 L94.5 64.1 L95.6 64.5 L96.7 65.0 L97.7 65.5 L98.6 66.0 L99.5 66.6 L100.5 67.3 L101.4 68.0 L102.0 68.5 L103.0 69.4 L103.7 70.0 L104.5 70.9 L105.1 71.5 L106.0 72.5 L106.5 73.1 L107.2 74.0 L108.0 75.0 L108.5 75.7 L109.1 76.5 L109.9 77.5 L110.5 78.2 L111.2 79.0 L112.0 79.9 L112.6 80.5 L113.5 81.3 L114.5 82.0 L115.3 82.5 L116.3 83.0 L117.5 83.5 L118.5 83.8 L119.5 84.1 L121.0 84.4 L122.0 84.6 L123.5 84.8 L124.6 85.0 L126.0 85.2 L127.5 85.4 L128.5 85.6 L130.0 85.8 L131.0 86.0 L132.5 86.3 L133.6 86.5 L135.0 86.8 L136.0 87.1 L137.5 87.5 L138.5 87.8 L139.5 88.1 L140.9 88.5 L142.0 88.9 L143.0 89.2 L144.0 89.6 L145.0 90.0 L146.2 90.5 L147.4 91.0 L148.5 91.5 L149.5 92.0 L150.5 92.4 L151.5 92.9 L152.5 93.4 L153.5 93.9 L154.5 94.4 L155.5 94.9 L156.5 95.4 L157.5 96.0"/><path d="M0.0 66.3 L1.4 66.5 L2.5 66.7 L4.0 66.9 L5.0 67.0 L6.5 67.2 L8.0 67.5 L9.0 67.6 L10.5 67.8 L12.0 68.0 L13.0 68.1 L14.5 68.2 L16.0 68.4 L17.5 68.5 L18.5 68.6 L20.0 68.7 L21.5 68.8 L23.0 68.8 L24.5 68.9 L26.0 68.9 L27.5 69.0 L29.0 69.0 L30.5 69.0 L32.0 69.0 L33.5 69.0 L35.0 69.0 L36.5 69.0 L38.0 69.0 L39.0 69.0 L40.5 69.1 L42.0 69.1 L43.5 69.2 L45.0 69.4 L46.4 69.5 L47.5 69.6 L49.0 69.8 L50.1 70.0 L51.5 70.2 L53.0 70.4 L54.0 70.6 L55.5 70.7 L57.0 70.8 L58.5 70.8 L60.0 70.7 L61.0 70.5 L62.5 70.2 L63.5 69.9 L64.6 69.5 L66.0 69.0 L67.0 68.6 L68.0 68.2 L69.0 67.8 L70.0 67.4 L71.0 67.0 L72.2 66.5 L73.5 66.0 L74.5 65.7 L75.5 65.4 L76.8 65.0 L78.0 64.7 L79.0 64.5 L80.5 64.2 L81.8 64.0 L83.0 63.9 L84.5 63.8 L86.0 63.8 L87.5 63.8 L88.9 64.0 L90.0 64.2 L91.4 64.5 L92.5 64.8 L93.5 65.1 L94.5 65.5 L95.5 66.0 L96.5 66.5 L97.5 67.1 L98.5 67.8 L99.5 68.5 L100.1 69.0 L101.0 69.8 L101.7 70.5 L102.5 71.4 L103.0 72.0 L103.8 73.0 L104.5 74.0 L105.0 74.8 L105.5 75.6 L106.0 76.5 L106.5 77.5 L107.0 78.5 L107.5 79.5 L108.0 80.6 L108.5 81.7 L109.0 82.8 L109.5 83.8 L110.0 84.7 L110.5 85.5 L111.3 86.5 L112.0 87.3 L112.9 88.0 L113.6 88.5 L114.5 89.0 L115.7 89.5 L117.0 89.9 L118.0 90.2 L119.1 90.5 L120.5 90.8 L121.5 91.0 L123.0 91.3 L124.2 91.5 L125.5 91.7 L126.8 92.0 L128.0 92.3 L129.1 92.5 L130.5 92.8 L131.5 93.1 L133.0 93.5 L134.0 93.8 L135.0 94.1 L136.3 94.5 L137.5 94.9 L138.5 95.2 L139.5 95.6"/><path d="M0.0 70.3 L1.5 70.5 L2.5 70.6 L4.0 70.8 L5.5 71.0 L6.5 71.1 L8.0 71.3 L9.4 71.5 L10.5 71.6 L12.0 71.8 L13.3 72.0 L14.5 72.1 L16.0 72.3 L17.5 72.5 L18.5 72.6 L20.0 72.7 L21.5 72.9 L23.0 73.0 L24.0 73.0 L25.5 73.1 L27.0 73.2 L28.5 73.2 L30.0 73.2 L31.5 73.2 L33.0 73.2 L34.5 73.2 L36.0 73.2 L37.5 73.2 L39.0 73.2 L40.5 73.3 L42.0 73.3 L43.5 73.4 L44.6 73.5 L46.0 73.6 L47.5 73.8 L48.7 74.0 L50.0 74.2 L51.5 74.4 L52.5 74.5 L54.0 74.7 L55.5 74.8 L57.0 74.7 L58.4 74.5 L59.5 74.2 L60.5 73.9 L61.6 73.5 L62.7 73.0 L63.7 72.5 L64.6 72.0 L65.5 71.5 L66.5 70.9 L67.5 70.4 L68.5 69.8 L69.5 69.3 L70.5 68.8 L71.5 68.3 L72.5 67.8 L73.5 67.4 L74.5 67.0 L75.9 66.5 L77.0 66.2 L78.0 65.9 L79.5 65.5 L80.5 65.3 L82.0 65.1 L83.0 65.0 L84.5 64.9 L86.0 64.9 L87.5 65.0 L88.5 65.1 L90.0 65.4 L91.0 65.6 L92.2 66.0 L93.5 66.5 L94.5 67.0 L95.5 67.5 L96.4 68.0 L97.1 68.5 L98.0 69.2 L99.0 70.0 L99.5 70.5 L100.4 71.5 L101.0 72.2 L101.6 73.0 L102.3 74.0 L102.9 75.0 L103.4 76.0 L103.9 77.0 L104.3 78.0 L104.7 79.0 L105.0 80.1 L105.3 81.5 L105.5 82.5 L105.8 84.0 L106.0 85.5 L106.1 86.5 L106.3 88.0 L106.5 89.3 L106.8 90.5 L107.1 91.5 L107.7 92.5 L108.4 93.5 L109.0 94.0 L110.0 94.7 L111.0 95.2 L112.0 95.6 L113.2 96.0"/><path d="M0.0 74.2 L1.5 74.4 L2.6 74.5 L4.0 74.7 L5.5 74.9 L6.5 75.0 L8.0 75.2 L9.5 75.5 L10.5 75.7 L12.0 75.9 L13.0 76.1 L14.5 76.4 L15.5 76.6 L17.0 76.9 L18.0 77.0 L19.5 77.3 L20.5 77.5 L22.0 77.8 L23.0 78.0 L24.5 78.3 L25.7 78.5 L27.0 78.7 L28.5 78.9 L29.5 79.1 L31.0 79.3 L32.5 79.4 L33.5 79.5 L35.0 79.6 L36.5 79.7 L38.0 79.8 L39.5 79.9 L41.0 80.0 L42.0 80.0 L43.5 80.2 L45.0 80.4 L46.0 80.5 L47.5 80.8 L48.5 81.0 L50.0 81.3 L51.0 81.5 L52.5 81.7 L54.0 81.9 L55.5 81.8 L56.6 81.5 L57.8 81.0 L58.6 80.5 L59.5 79.8 L60.5 79.0 L61.0 78.5 L62.0 77.5 L62.6 77.0 L63.5 76.1 L64.1 75.5 L65.0 74.7 L65.8 74.0 L66.5 73.4 L67.5 72.6 L68.3 72.0 L69.0 71.5 L70.0 70.8 L71.0 70.2 L72.0 69.6 L73.0 69.0 L74.0 68.6 L75.0 68.1 L76.0 67.7 L77.0 67.3 L78.1 67.0 L79.5 66.6 L80.5 66.4 L82.0 66.2 L83.5 66.0 L84.5 66.0 L86.0 66.0 L87.0 66.0 L88.5 66.2 L89.8 66.5 L91.0 66.8 L92.0 67.2 L93.0 67.6 L94.0 68.1 L95.0 68.6 L96.0 69.3 L96.9 70.0 L97.5 70.5 L98.5 71.5 L99.0 72.0 L99.8 73.0 L100.5 74.0 L101.0 74.9 L101.5 75.9 L102.0 77.0 L102.3 78.0 L102.6 79.0 L102.9 80.5 L103.0 81.5 L103.1 83.0 L103.1 84.5 L103.0 85.6 L102.8 87.0 L102.5 88.5 L102.2 89.5 L102.0 90.5 L101.5 91.9 L101.1 93.0 L100.8 94.0 L100.5 95.0"/><path d="M73.7 96.0 L72.8 95.5 L72.0 95.0 L71.0 94.3 L70.0 93.5 L69.4 93.0 L68.5 92.1 L67.9 91.5 L67.1 90.5 L66.5 89.7 L66.0 88.9 L65.5 87.9 L65.0 86.8 L64.6 85.5 L64.5 84.5 L64.4 83.0 L64.5 81.8 L64.8 80.5 L65.1 79.5 L65.5 78.5 L66.0 77.5 L66.7 76.5 L67.4 75.5 L68.0 74.8 L68.7 74.0 L69.5 73.2 L70.3 72.5 L71.0 71.9 L72.0 71.2 L73.0 70.5 L73.9 70.0 L74.8 69.5 L75.8 69.0 L77.0 68.5 L78.0 68.2 L79.0 67.8 L80.3 67.5 L81.5 67.3 L83.0 67.1 L84.1 67.0 L85.5 67.0 L86.5 67.0 L88.0 67.2 L89.3 67.5 L90.5 67.8 L91.5 68.2 L92.5 68.6 L93.5 69.1 L94.5 69.7 L95.5 70.5 L96.2 71.0 L97.0 71.8 L97.6 72.5 L98.4 73.5 L99.0 74.4 L99.5 75.3 L100.0 76.3 L100.4 77.5 L100.7 78.5 L101.0 80.0 L101.1 81.0 L101.1 82.5 L101.0 83.5 L100.8 85.0 L100.5 86.0 L100.0 87.4 L99.5 88.5 L99.0 89.5 L98.5 90.3 L98.0 91.1 L97.3 92.0 L96.5 92.9 L95.9 93.5 L95.0 94.3 L94.1 95.0 L93.4 95.5"/><path d="M0.0 78.0 L1.0 78.1 L2.5 78.3 L4.0 78.5 L5.0 78.6 L6.5 78.9 L7.5 79.1 L9.0 79.4 L10.0 79.6 L11.4 80.0 L12.5 80.3 L13.5 80.6 L14.8 81.0 L16.0 81.4 L17.0 81.8 L18.0 82.2 L19.0 82.6 L20.0 83.0 L21.0 83.5 L22.1 84.0 L23.0 84.5 L24.0 85.0 L25.0 85.6 L26.0 86.3 L27.0 86.9 L27.8 87.5 L28.5 88.0 L29.5 88.8 L30.3 89.5 L31.0 90.1 L32.0 91.0 L32.6 91.5 L33.5 92.3 L34.3 93.0 L35.0 93.6 L36.0 94.5 L36.7 95.0 L37.5 95.6"/><path d="M87.0 94.5 L85.5 94.7 L84.0 94.8 L82.5 94.7 L81.0 94.5 L80.0 94.3 L78.8 94.0 L77.5 93.6 L76.5 93.2 L75.5 92.7 L74.5 92.1 L73.6 91.5 L72.9 91.0 L72.0 90.3 L71.2 89.5 L70.5 88.8 L69.9 88.0 L69.2 87.0 L68.7 86.0 L68.3 85.0 L67.9 84.0 L67.7 82.5 L67.7 81.0 L67.9 79.5 L68.2 78.5 L68.6 77.5 L69.1 76.5 L69.7 75.5 L70.5 74.5 L71.0 73.9 L71.9 73.0 L72.5 72.5 L73.5 71.7 L74.5 71.1 L75.4 70.5 L76.4 70.0 L77.5 69.5 L78.5 69.1 L79.5 68.8 L80.6 68.5 L82.0 68.2 L83.5 68.1 L85.0 68.0 L86.5 68.1 L88.0 68.3 L89.0 68.5 L90.5 69.0 L91.5 69.4 L92.5 69.9 L93.5 70.5 L94.3 71.0 L95.0 71.6 L95.9 72.5 L96.5 73.1 L97.2 74.0 L97.8 75.0 L98.3 76.0 L98.7 77.0 L99.0 78.0 L99.3 79.5 L99.4 81.0 L99.3 82.5 L99.0 84.0 L98.7 85.0 L98.3 86.0 L97.8 87.0 L97.3 88.0 L96.5 89.0 L96.0 89.6 L95.2 90.5 L94.5 91.1 L93.5 91.9 L92.5 92.5 L91.6 93.0 L90.5 93.5 L89.5 93.9 L88.5 94.2 L87.2 94.5"/><path d="M0.0 81.7 L1.5 81.8 L2.5 82.0 L4.0 82.3 L5.2 82.5 L6.5 82.8 L7.5 83.1 L8.8 83.5 L10.0 83.9 L11.0 84.3 L12.0 84.7 L13.0 85.2 L14.0 85.7 L15.0 86.3 L16.0 86.9 L16.8 87.5 L17.5 88.0 L18.5 88.8 L19.2 89.5 L20.0 90.3 L20.6 91.0 L21.5 92.0 L22.0 92.7 L22.6 93.5 L23.2 94.5 L23.8 95.5"/><path d="M88.0 92.0 L86.5 92.3 L85.0 92.4 L83.5 92.4 L82.0 92.3 L80.5 92.0 L79.5 91.8 L78.5 91.4 L77.5 91.0 L76.5 90.5 L75.5 89.9 L74.5 89.2 L73.7 88.5 L73.0 87.9 L72.2 87.0 L71.5 86.0 L71.0 85.1 L70.5 84.0 L70.2 83.0 L70.0 81.5 L70.0 80.5 L70.1 79.5 L70.5 78.0 L70.9 77.0 L71.4 76.0 L72.0 75.1 L72.5 74.5 L73.4 73.5 L74.0 73.0 L75.0 72.2 L76.0 71.5 L76.9 71.0 L77.9 70.5 L79.0 70.1 L80.0 69.7 L81.0 69.5 L82.5 69.2 L84.0 69.0 L85.5 69.0 L87.0 69.2 L88.5 69.5 L89.5 69.8 L90.5 70.1 L91.5 70.6 L92.5 71.2 L93.5 71.9 L94.2 72.5 L95.0 73.3 L95.6 74.0 L96.2 75.0 L96.8 76.0 L97.2 77.0 L97.5 78.0 L97.8 79.5 L97.8 81.0 L97.6 82.5 L97.4 83.5 L97.0 84.6 L96.5 85.6 L96.0 86.5 L95.3 87.5 L94.5 88.4 L93.8 89.0 L93.0 89.7 L92.0 90.3 L91.0 90.9 L90.0 91.4 L89.0 91.7 L88.0 92.0"/><path d="M0.0 85.5 L1.5 85.7 L2.8 86.0 L4.0 86.3 L5.0 86.6 L6.1 87.0 L7.4 87.5 L8.4 88.0 L9.3 88.5 L10.1 89.0 L11.0 89.6 L12.0 90.4 L12.7 91.0 L13.5 91.8 L14.1 92.5 L14.8 93.5 L15.5 94.5 L16.0 95.4"/><path d="M85.5 90.5 L84.0 90.6 L82.7 90.5 L81.5 90.3 L80.3 90.0 L79.0 89.6 L78.0 89.1 L77.0 88.6 L76.2 88.0 L75.5 87.5 L74.5 86.5 L74.0 86.0 L73.3 85.0 L72.8 84.0 L72.4 83.0 L72.0 81.5 L71.9 80.5 L72.0 79.5 L72.3 78.0 L72.7 77.0 L73.2 76.0 L74.0 75.0 L74.5 74.4 L75.4 73.5 L76.0 73.0 L77.0 72.3 L78.0 71.7 L79.0 71.2 L80.0 70.9 L81.2 70.5 L82.5 70.2 L84.0 70.1 L85.5 70.1 L87.0 70.2 L88.2 70.5 L89.5 70.9 L90.5 71.4 L91.5 71.9 L92.3 72.5 L93.0 73.0 L94.0 74.0 L94.5 74.7 L95.0 75.5 L95.5 76.5 L96.0 77.9 L96.2 79.0 L96.3 80.5 L96.1 82.0 L95.9 83.0 L95.5 84.0 L94.9 85.0 L94.3 86.0 L93.5 86.9 L92.9 87.5 L92.0 88.2 L91.0 88.8 L90.0 89.4 L89.0 89.8 L88.0 90.1 L86.5 90.4 L85.5 90.5"/><path d="M0.0 90.1 L1.5 90.5 L2.5 90.8 L3.5 91.3 L4.5 91.8 L5.5 92.4 L6.3 93.0 L7.0 93.6 L7.8 94.5 L8.5 95.5"/><path d="M87.5 88.5 L86.0 88.8 L84.5 88.9 L83.0 88.8 L81.5 88.6 L80.5 88.3 L79.5 87.9 L78.5 87.4 L77.5 86.8 L76.5 86.0 L76.0 85.5 L75.2 84.5 L74.6 83.5 L74.2 82.5 L73.9 81.5 L73.7 80.0 L73.9 78.5 L74.2 77.5 L74.7 76.5 L75.4 75.5 L76.0 74.8 L76.8 74.0 L77.5 73.4 L78.5 72.8 L79.5 72.3 L80.5 71.9 L81.8 71.5 L83.0 71.3 L84.5 71.1 L86.0 71.2 L87.5 71.5 L88.5 71.8 L89.5 72.2 L90.5 72.7 L91.5 73.4 L92.2 74.0 L93.0 74.9 L93.5 75.6 L94.0 76.5 L94.5 77.8 L94.7 79.0 L94.8 80.5 L94.5 82.0 L94.2 83.0 L93.7 84.0 L93.0 85.0 L92.5 85.6 L91.5 86.5 L90.8 87.0 L90.0 87.5 L89.0 88.0 L87.6 88.5"/><path d="M86.5 87.1 L85.0 87.3 L83.5 87.3 L82.0 87.0 L81.0 86.7 L80.0 86.3 L79.0 85.7 L78.0 85.0 L77.5 84.5 L76.7 83.5 L76.1 82.5 L75.7 81.5 L75.5 80.0 L75.7 78.5 L76.0 77.5 L76.5 76.5 L77.3 75.5 L78.0 74.8 L79.0 74.0 L79.8 73.5 L80.9 73.0 L82.0 72.7 L83.0 72.4 L84.5 72.3 L86.0 72.4 L87.0 72.6 L88.4 73.0 L89.4 73.5 L90.2 74.0 L91.0 74.7 L91.8 75.5 L92.4 76.5 L92.9 77.5 L93.1 78.5 L93.2 80.0 L93.0 81.5 L92.6 82.5 L92.1 83.5 L91.5 84.3 L90.8 85.0 L90.0 85.6 L89.0 86.2 L88.0 86.7 L86.9 87.0"/><path d="M86.0 85.5 L84.5 85.6 L83.0 85.5 L82.0 85.3 L81.0 84.9 L80.0 84.3 L79.1 83.5 L78.5 82.9 L77.9 82.0 L77.5 80.7 L77.4 79.5 L77.5 78.5 L78.0 77.3 L78.5 76.5 L79.4 75.5 L80.1 75.0 L81.0 74.5 L82.2 74.0 L83.5 73.7 L85.0 73.6 L86.5 73.8 L87.5 74.1 L88.5 74.6 L89.5 75.3 L90.2 76.0 L90.9 77.0 L91.3 78.0 L91.5 79.0 L91.5 80.4 L91.2 81.5 L90.7 82.5 L90.0 83.4 L89.3 84.0 L88.5 84.6 L87.5 85.1 L86.0 85.5"/><path d="M86.0 83.5 L84.5 83.7 L83.0 83.5 L82.0 83.1 L81.0 82.5 L80.5 82.0 L79.9 81.0 L79.5 79.5 L79.9 78.0 L80.5 77.0 L81.0 76.5 L82.0 75.9 L83.0 75.5 L84.5 75.2 L86.0 75.4 L87.0 75.7 L88.0 76.4 L88.7 77.0 L89.3 78.0 L89.5 79.0 L89.5 80.0 L89.0 81.4 L88.5 82.1 L87.5 82.9 L86.5 83.4"/><path d="M85.0 80.6 L83.9 80.5 L83.1 79.5 L83.5 78.5 L85.0 78.1 L86.0 78.9 L86.0 79.7 L85.2 80.5"/></svg>
<div class="abs" style="left:20px;top:22px;font-size:14px;font-weight:400;color:#fff;white-space:nowrap;letter-spacing:0.36px;-webkit-text-stroke:0.55px #fff">Prezență la urne</div>
<div class="abs" style="left:20px;top:62px;width:167px;height:8px;border-radius:4px;background:rgba(255,255,255,0.45)"></div>
<div class="abs" style="left:20px;top:62px;width:3.5px;height:8px;border-radius:1.5px 0 0 1.5px;background:#fff"></div>
<div class="abs" style="left:196.6px;top:58px;font-size:14px;font-weight:700;color:#fff;white-space:nowrap;-webkit-text-stroke:0.3px #fff"><span style="letter-spacing:1.35px">2,50</span><span style="letter-spacing:-0.4px"> </span>%</div>
</div>
<div class="card" style="left:296.67px"><div class="t" style="top:22px">Înscriși pe liste permanente</div><div class="v" style="top:58px">18.008.480</div></div>
<div class="card" style="left:578.33px"><div class="t" style="top:22px">Votanți pe liste permanente</div><div class="v" style="top:58px;letter-spacing:0.1px">163.194</div></div>
<div class="card" style="left:860px"><div class="t" style="top:22px">Votanți pe liste suplimentare</div><div class="v" style="top:58px;letter-spacing:1px">283.326</div></div>
<div class="card" style="left:1141.67px"><div class="t" style="top:22px">Votanți cu urnă mobilă</div><div class="v" style="top:58px;letter-spacing:0px">16</div></div>
<div class="card" style="left:1423.33px"><div class="t" style="top:22px">Total votanți</div><svg class="abs" style="left:107px;top:22.5px" width="16" height="16" viewBox="0 0 16 16" fill="none" stroke="#555" stroke-width="1.25"><rect x="1.2" y="1.2" width="13.6" height="13.6" rx="5.5"/><path d="M8 7 V11.3" stroke-linecap="round"/><circle cx="8" cy="4.7" r="0.45" fill="#555"/></svg><div class="v" style="top:58px;letter-spacing:1px">450.763</div></div>
<div class="abs" style="left:15px;top:177px;width:1281px;height:30px;background:#2bce8f;border-radius:5px 0 0 5px"></div>
<div class="abs" style="left:1296px;top:177px;width:393px;height:30px;background:#03a9f4"></div>
<div class="abs" style="left:15px;top:177px;width:1281px;height:30px;line-height:30px;text-align:center;color:#fff;font-size:14px;letter-spacing:0.3px;-webkit-text-stroke:0.3px #fff">Urban: 344.921</div>
<div class="abs" style="left:1296px;top:177px;width:393px;height:30px;line-height:30px;text-align:center;color:#fff;font-size:14px;letter-spacing:0.3px;-webkit-text-stroke:0.3px #fff">Rural: 105.842</div>
<div id="panel"></div>
<div id="plhdr" class="abs" style="left:15px;top:223px;width:1674px;height:43px;border-bottom:1px solid #efefef"></div>
<div class="abs" style="left:35px;top:235px;font-size:15px;font-weight:400;color:#1f2130;white-space:nowrap;letter-spacing:0.52px;-webkit-text-stroke:0.45px #1f2130">Listă județe</div>
<div class="abs" style="left:43px;top:288px;font-size:13px;color:#9c9c9c;white-space:nowrap;letter-spacing:0.45px">NIVEL</div>
<div class="abs" style="left:43.5px;top:306px;width:97.5px;height:32.5px;border:1px solid #f2f2f2;box-shadow:0 1px 1px rgba(0,0,0,0.02);border-radius:4px"></div>
<div class="abs" style="left:48px;top:311px;width:39px;height:23px;background:#4a8af4;border-radius:4px;color:#fff;font-size:12px;font-weight:700;line-height:25px;text-align:center;letter-spacing:0.3px">Țară</div>
<div class="abs" style="left:98px;top:316.3px;font-size:12px;color:#222;white-space:nowrap;letter-spacing:0.5px">Județ</div>
<table>
<colgroup><col style="width:205px"><col style="width:87.2px"><col style="width:229px"><col style="width:229px"><col style="width:235px"><col style="width:227px"><col style="width:191px"><col style="width:139px"><col style="width:91px"></colgroup>
<thead><tr><th>Județ</th><th>Nr secții</th><th>Înscriși pe liste permanente</th><th>Votanți pe liste permanente</th><th>Votanți pe liste suplimentare</th><th>Votanți prin corespondență</th><th>Votanți cu urnă mobilă</th><th><span style="position:relative;top:-1px">Total votanți<svg style="vertical-align:-3px;margin-left:0.6px" width="18" height="14" viewBox="0 0 18 14" fill="none" stroke="#111" stroke-width="1.9"><path d="M1 2.1 H10.2 M1 7 H8.5 M1 11.8 H8.5"/><path d="M13.5 0.9 V12.6" stroke-width="1.5"/><path d="M10.7 9.6 L13.5 12.6 L16.3 9.6" stroke-width="1.6"/></svg></span></th><th>Prezență</th></tr></thead>
<tbody>
<tr><td>STRĂINĂTATE</td><td>9<b class="p">5</b>1</td><td>0</td><td>0</td><td><b class="p">2</b><b class="o">1</b>9.482</td><td>4.227</td><td>0</td><td>223.709</td><td class="pc"><span class="badge" style="letter-spacing:0.8px;padding:0 4px 0 5px">0.00 %</span></td></tr>
<tr><td>MUNICIPIUL BUCUREȘTI</td><td><b class="o">1</b>.289</td><td><b class="o">1</b>.784<b class="p">.</b><b class="o">1</b>53</td><td><b class="o">1</b>4.296</td><td>3.882</td><td>0</td><td>5</td><td><b class="o">1</b>8<b class="p">.</b><b class="o">1</b>83</td><td class="pc"><span class="badge" style="letter-spacing:-0.1px">1,01 %</span></td></tr>
<tr><td>IAȘI</td><td>783</td><td>809.586</td><td>6.7<b class="p">5</b>1</td><td>3<b class="p">.</b><b class="o">1</b>06</td><td>0</td><td>0</td><td>9.857</td><td class="pc"><span class="badge" style="letter-spacing:-0.1px">1,21 %</span></td></tr>
<tr><td>CONSTANȚA</td><td>562</td><td><b class="p">6</b><b class="o">1</b>2.895</td><td>7.450</td><td>2.2<b class="p">5</b>1</td><td>0</td><td>0</td><td>9.7<b class="p">0</b>1</td><td class="pc"><span class="badge">1,58 %</span></td></tr>
<tr><td style="position:relative"><svg class="abs" style="left:0;top:0" width="110" height="45" viewBox="35.5 581 110 45"><path d="M37.9 582.3 L60 582.6 L90 583.2 L98 583.9 L138.2 584 L138.3 616 L137 617.6 L90 617.6 L80 616.6 L38 616.3 Z" fill="#f9e300"/></svg><span style="position:relative">PRAHOVA</span></td><td>624</td><td>632.065</td><td>6.<b class="p">5</b><b class="o">1</b>2</td><td>2<b class="p">.</b><b class="p">1</b><b class="o">1</b>3</td><td>0</td><td>0</td><td>8.625</td><td class="pc"><span class="badge">1,36 %</span></td></tr>
<tr><td>TIMIȘ</td><td><b class="p">6</b><b class="o">1</b>9</td><td>630.642</td><td>4.856</td><td>2.755</td><td>0</td><td>0</td><td>7.<b class="p">6</b><b class="p">1</b>1</td><td class="pc"><span class="badge">1,20 %</span></td></tr>
<tr><td>CLUJ</td><td>674</td><td><b class="p">6</b><b class="o">1</b>5.924</td><td>4.572</td><td>2.949</td><td>0</td><td>0</td><td>7.5<b class="p">2</b>1</td><td class="pc"><span class="badge">1,22 %</span></td></tr>
<tr><td>ILFOV</td><td>294</td><td>426.754</td><td>5.453</td><td><b class="o">1</b>.826</td><td>0</td><td>1</td><td>7.280</td><td class="pc"><span class="badge">1,70 %</span></td></tr>
<tr><td>ARGEȘ</td><td>527</td><td>509.7<b class="p">5</b>1</td><td>5.242</td><td><b class="o">1</b>.<b class="p">8</b><b class="o">1</b>2</td><td>0</td><td>0</td><td>7.054</td><td class="pc"><span class="badge">1,38 %</span></td></tr>
<tr><td>SUCEAVA</td><td>5<b class="p">6</b>1</td><td>607.742</td><td>4.999</td><td><b class="o">1</b>.996</td><td>0</td><td>0</td><td>6.995</td><td class="pc"><span class="badge" style="letter-spacing:-0.1px">1,15 %</span></td></tr>
<tr><td>BACĂU</td><td>582</td><td>598<b class="p">.</b><b class="o">1</b>23</td><td>4<b class="p">.</b><b class="o">1</b>20</td><td><b class="o">1</b>.902</td><td>0</td><td>0</td><td>6.022</td><td class="pc"><span class="badge" style="letter-spacing:-0.1px">1,01 %</span></td></tr>
</tbody>
</table>

</body>
</html>
